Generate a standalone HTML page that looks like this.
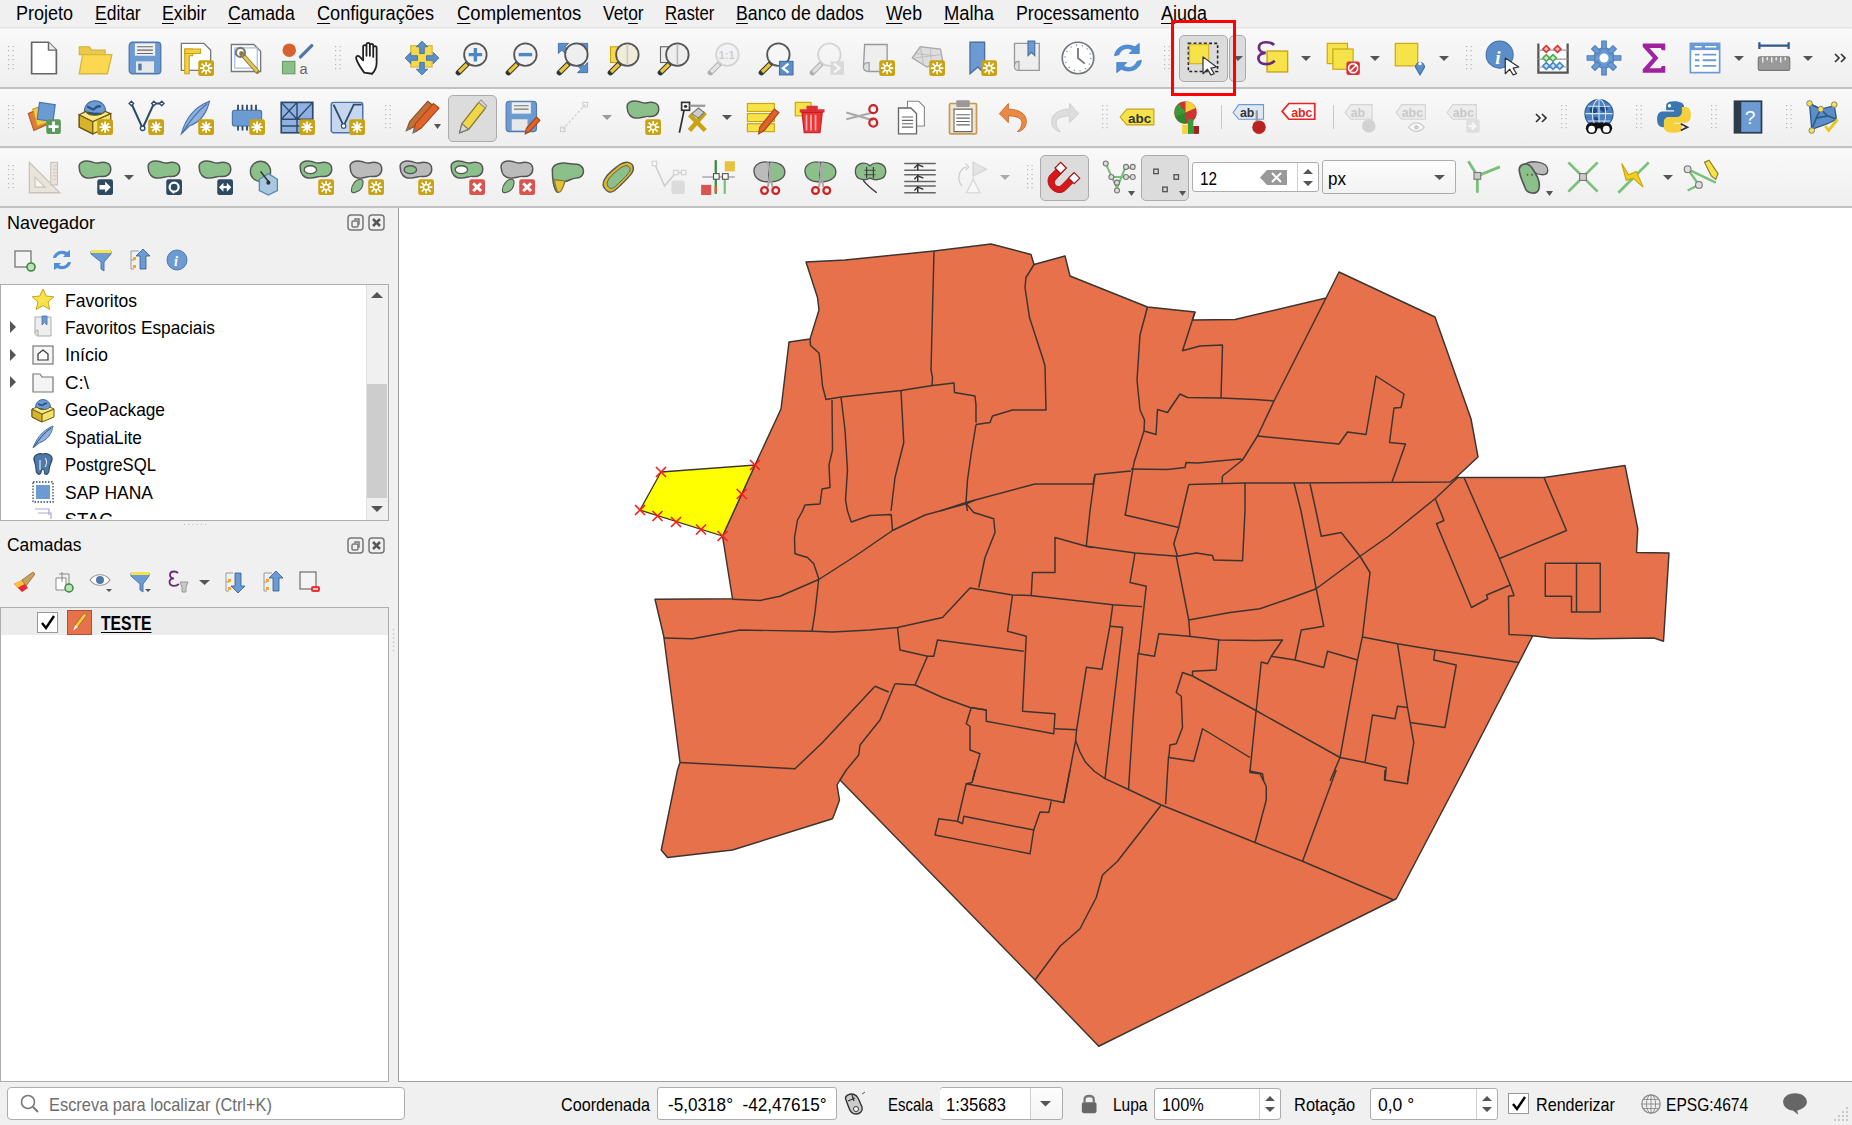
<!DOCTYPE html>
<html><head><meta charset="utf-8">
<style>
*{box-sizing:border-box}
html,body{margin:0;padding:0;width:1852px;height:1125px;overflow:hidden;background:#f0f0f0;font-family:"Liberation Sans",sans-serif;color:#000;position:relative}
.a{position:absolute}
.menu{position:absolute;top:0;left:0;width:1852px;height:28px;background:#f0f0f0;border-bottom:1px solid #e3e3e3}
.mi{position:absolute;white-space:nowrap}
.mi u{text-decoration:underline;text-underline-offset:3px;text-decoration-thickness:1px}
.tb{position:absolute;left:0;width:1852px;background:linear-gradient(#f9f9f9,#efefef);border-bottom:2px solid #c2c2c2}
.handle{position:absolute;width:6px;height:28px;background-image:radial-gradient(circle,#b8b8b8 45%,transparent 50%);background-size:3px 4px}
.dock{position:absolute;left:0;width:388px}
.title{position:absolute;font-size:18px}
.tree{position:absolute;background:#fff;border:1px solid #adadad}
.ti{position:absolute;font-size:18px;white-space:nowrap}
.status{position:absolute;left:0;top:1082px;width:1852px;height:43px;background:#f0f0f0}
.st{position:absolute;font-size:17px;white-space:nowrap}
.box{position:absolute;background:#fff;border:1px solid #adadad;border-radius:3px}
svg{position:absolute;overflow:visible}
.act{position:absolute;background:#dcdcdc;border:1.5px solid #ababab;border-radius:5px}
.chev{font-size:22px;color:#333;line-height:28px}
</style></head><body>
<!-- MENU -->
<div class="menu"></div>
<div class="mi" style="left:15.7px;top:3.1px;font-size:19.3px;font-weight:normal;color:#000;transform:scaleX(0.933);transform-origin:0 0;">Projeto</div>
<div class="mi" style="left:95.0px;top:3.1px;font-size:19.3px;font-weight:normal;color:#000;transform:scaleX(0.907);transform-origin:0 0;"><u>E</u>ditar</div>
<div class="mi" style="left:162.3px;top:3.1px;font-size:19.3px;font-weight:normal;color:#000;transform:scaleX(0.921);transform-origin:0 0;"><u>E</u>xibir</div>
<div class="mi" style="left:228.3px;top:3.1px;font-size:19.3px;font-weight:normal;color:#000;transform:scaleX(0.915);transform-origin:0 0;"><u>C</u>amada</div>
<div class="mi" style="left:317.3px;top:3.1px;font-size:19.3px;font-weight:normal;color:#000;transform:scaleX(0.941);transform-origin:0 0;"><u>C</u>onfigurações</div>
<div class="mi" style="left:456.7px;top:3.1px;font-size:19.3px;font-weight:normal;color:#000;transform:scaleX(0.958);transform-origin:0 0;"><u>C</u>omplementos</div>
<div class="mi" style="left:602.7px;top:3.1px;font-size:19.3px;font-weight:normal;color:#000;transform:scaleX(0.901);transform-origin:0 0;">Vet<u>o</u>r</div>
<div class="mi" style="left:665.0px;top:3.1px;font-size:19.3px;font-weight:normal;color:#000;transform:scaleX(0.868);transform-origin:0 0;"><u>R</u>aster</div>
<div class="mi" style="left:736.0px;top:3.1px;font-size:19.3px;font-weight:normal;color:#000;transform:scaleX(0.918);transform-origin:0 0;"><u>B</u>anco de dados</div>
<div class="mi" style="left:885.7px;top:3.1px;font-size:19.3px;font-weight:normal;color:#000;transform:scaleX(0.916);transform-origin:0 0;"><u>W</u>eb</div>
<div class="mi" style="left:944.0px;top:3.1px;font-size:19.3px;font-weight:normal;color:#000;transform:scaleX(0.952);transform-origin:0 0;"><u>M</u>alha</div>
<div class="mi" style="left:1016.0px;top:3.1px;font-size:19.3px;font-weight:normal;color:#000;transform:scaleX(0.918);transform-origin:0 0;">Pro<u>c</u>essamento</div>
<div class="mi" style="left:1161.0px;top:3.1px;font-size:19.3px;font-weight:normal;color:#000;transform:scaleX(0.932);transform-origin:0 0;"><u>A</u>juda</div>
<!-- TOOLBARS -->
<div class="tb" style="top:29px;height:60px"></div>
<div class="tb" style="top:89px;height:59px"></div>
<div class="tb" style="top:149px;height:59px"></div>

<svg style="left:8px;top:46px" width="6" height="26"><g fill="#b5b5b5"><rect x="0" y="0" width="1.2" height="1.2"/><rect x="4.5" y="0" width="1.2" height="1.2"/><rect x="0" y="4" width="1.2" height="1.2"/><rect x="4.5" y="4" width="1.2" height="1.2"/><rect x="0" y="9" width="1.2" height="1.2"/><rect x="4.5" y="9" width="1.2" height="1.2"/><rect x="0" y="13" width="1.2" height="1.2"/><rect x="4.5" y="13" width="1.2" height="1.2"/><rect x="0" y="18" width="1.2" height="1.2"/><rect x="4.5" y="18" width="1.2" height="1.2"/><rect x="0" y="22" width="1.2" height="1.2"/><rect x="4.5" y="22" width="1.2" height="1.2"/></g></svg>
<svg style="left:26px;top:40px" width="36" height="36" viewBox="0 0 32 32"><path d="M5 2h15l7 7v21H5z" fill="#fff" stroke="#666" stroke-width="1.5" stroke-linejoin="round"/><path d="M20 2v7h7" fill="#eee" stroke="#666" stroke-width="1.3"/></svg>
<svg style="left:77px;top:40px" width="36" height="36" viewBox="0 0 32 32"><path d="M2 6h9l2 3h12v4H2z" fill="#e9c94a" stroke="#d4b23a"/><path d="M2 30L5 13h26l-4 17z" fill="#fbd84f" stroke="#d9b63c" stroke-width="1.2"/></svg>
<svg style="left:127px;top:40px" width="36" height="36" viewBox="0 0 32 32"><rect x="2" y="2" width="28" height="28" rx="3" fill="#6b9bd2" stroke="#4f79ab" stroke-width="1.2"/><rect x="7" y="3" width="18" height="11" fill="#f0f0f0"/><path d="M9 6h14M9 9h14M9 12h14" stroke="#666" stroke-width="1"/><rect x="8" y="19" width="16" height="10" fill="#e8e8e8"/><rect x="10" y="21" width="3" height="6" fill="#4f79ab"/></svg>
<svg style="left:178px;top:40px" width="36" height="36" viewBox="0 0 32 32"><path d="M3 3h20l6 6v18H3z" fill="#fff" stroke="#777" stroke-width="1.2"/><path d="M6 8h7v6h-3v16H6z" fill="#f4cf48" stroke="#c9a313"/><path d="M6 8h14v4H6z" fill="#f4cf48" stroke="#c9a313"/><rect x="18" y="18" width="14" height="14" rx="2" fill="#c9a313"/><path d="M25 19.5v11M19.5 25h11M21 21l8 8M29 21l-8 8" stroke="#fff" stroke-width="1.4"/><circle cx="25" cy="25" r="2.3" fill="#c9a313" stroke="#fff" stroke-width="1.2"/></svg>
<svg style="left:228px;top:40px" width="36" height="36" viewBox="0 0 32 32"><path d="M3 4h20l6 6v18H3z" fill="#fff" stroke="#777" stroke-width="1.2"/><rect x="6" y="7" width="20" height="18" fill="none" stroke="#9ab6e6"/><path d="M12 12l14 16" stroke="#8a7a3a" stroke-width="4" stroke-linecap="round"/><path d="M13 13l13 15" stroke="#e5c454" stroke-width="2.5"/><circle cx="11" cy="11" r="4" fill="none" stroke="#777" stroke-width="2"/></svg>
<svg style="left:278px;top:40px" width="36" height="36" viewBox="0 0 32 32"><circle cx="10" cy="9" r="6" fill="#d8622f"/><path d="M20 15L30 5" stroke="#4f79ab" stroke-width="3" stroke-linecap="round"/><rect x="4" y="19" width="11" height="11" fill="#8cc08a" stroke="#6a9a68"/><text x="19" y="30" font-family="Liberation Sans" font-size="13" fill="#666">a</text></svg>
<svg style="left:335px;top:46px" width="6" height="26"><g fill="#b5b5b5"><rect x="0" y="0" width="1.2" height="1.2"/><rect x="4.5" y="0" width="1.2" height="1.2"/><rect x="0" y="4" width="1.2" height="1.2"/><rect x="4.5" y="4" width="1.2" height="1.2"/><rect x="0" y="9" width="1.2" height="1.2"/><rect x="4.5" y="9" width="1.2" height="1.2"/><rect x="0" y="13" width="1.2" height="1.2"/><rect x="4.5" y="13" width="1.2" height="1.2"/><rect x="0" y="18" width="1.2" height="1.2"/><rect x="4.5" y="18" width="1.2" height="1.2"/><rect x="0" y="22" width="1.2" height="1.2"/><rect x="4.5" y="22" width="1.2" height="1.2"/></g></svg>
<svg style="left:353px;top:40px" width="36" height="36" viewBox="0 0 32 32"><path d="M10 29C7 25 4 20 3 17C2 15 4 13 6 15L9 18V6C9 4 12 4 12 6V14V4C12 2 15 2 15 4V14V5C15 3 18 3 18 5V15V7C18 5 21 5 21 7V20C21 25 19 28 17 30Z" fill="#fff" stroke="#222" stroke-width="1.6" stroke-linejoin="round"/></svg>
<svg style="left:404px;top:40px" width="36" height="36" viewBox="0 0 32 32"><rect x="6" y="5" width="19" height="19" fill="#f5d94a" stroke="#d6b73a"/><path d="M16 1l5 5h-3v6h-4V6h-3zM16 31l5-5h-3v-6h-4v6h-3zM1 16l5-5v3h6v4H6v3zM31 16l-5-5v3h-6v4h6v3z" fill="#5c8fc9" stroke="#3f6fa8" stroke-width="0.8"/></svg>
<svg style="left:454px;top:40px" width="36" height="36" viewBox="0 0 32 32"><path d="M4 29L12 21" stroke="#333" stroke-width="5" stroke-linecap="round"/><path d="M4.5 28.5L11.5 21.5" stroke="#e8c83a" stroke-width="3"/><circle cx="19" cy="13" r="10" fill="#f2f2f2" stroke="#555" stroke-width="1.6"/><path d="M19 7v12M13 13h12" stroke="#4f86c6" stroke-width="3"/></svg>
<svg style="left:504px;top:40px" width="36" height="36" viewBox="0 0 32 32"><path d="M4 29L12 21" stroke="#333" stroke-width="5" stroke-linecap="round"/><path d="M4.5 28.5L11.5 21.5" stroke="#e8c83a" stroke-width="3"/><circle cx="19" cy="13" r="10" fill="#f2f2f2" stroke="#555" stroke-width="1.6"/><path d="M13 13h12" stroke="#4f86c6" stroke-width="3"/></svg>
<svg style="left:555px;top:40px" width="36" height="36" viewBox="0 0 32 32"><path d="M3 3h9l-3 3 5 5-3 3-5-5-3 3zM29 3v9l-3-3-5 5-3-3 5-5-3-3zM29 29h-9l3-3-5-5 3-3 5 5 3-3z" fill="#5c8fc9" stroke="#3f6fa8" stroke-width="0.8"/><path d="M4 29L12 21" stroke="#333" stroke-width="5" stroke-linecap="round"/><path d="M4.5 28.5L11.5 21.5" stroke="#e8c83a" stroke-width="3"/><circle cx="19" cy="13" r="10" fill="#eee" stroke="#555" stroke-width="1.6"/></svg>
<svg style="left:606px;top:40px" width="36" height="36" viewBox="0 0 32 32"><rect x="4" y="6" width="12" height="14" fill="#f5d94a" stroke="#c9a313"/><path d="M4 29L12 21" stroke="#333" stroke-width="5" stroke-linecap="round"/><path d="M4.5 28.5L11.5 21.5" stroke="#e8c83a" stroke-width="3"/><circle cx="19" cy="13" r="10" fill="#f0ecd8" stroke="#555" stroke-width="1.6"/><path d="M19 4v18" stroke="#ccc" stroke-width="1.5"/></svg>
<svg style="left:656px;top:40px" width="36" height="36" viewBox="0 0 32 32"><rect x="4" y="6" width="12" height="14" fill="#eee" stroke="#666"/><path d="M4 29L12 21" stroke="#333" stroke-width="5" stroke-linecap="round"/><path d="M4.5 28.5L11.5 21.5" stroke="#e8c83a" stroke-width="3"/><circle cx="19" cy="13" r="10" fill="#eee" stroke="#555" stroke-width="1.6"/><path d="M19 4v18" stroke="#bbb" stroke-width="1.5"/></svg>
<svg style="left:706px;top:40px" width="36" height="36" viewBox="0 0 32 32"><g opacity="0.35"><path d="M4 29L12 21" stroke="#333" stroke-width="5" stroke-linecap="round"/><path d="M4.5 28.5L11.5 21.5" stroke="#ccc" stroke-width="3"/><circle cx="19" cy="13" r="10" fill="#eee" stroke="#999" stroke-width="1.6"/><text x="11" y="17" font-family="Liberation Sans" font-size="10" font-weight="bold" fill="#888">1:1</text></g></svg>
<svg style="left:757px;top:40px" width="36" height="36" viewBox="0 0 32 32"><path d="M4 29L12 21" stroke="#333" stroke-width="5" stroke-linecap="round"/><path d="M4.5 28.5L11.5 21.5" stroke="#e8c83a" stroke-width="3"/><circle cx="19" cy="13" r="10" fill="#f6f6f6" stroke="#555" stroke-width="1.6"/><rect x="20" y="19" width="12" height="12" fill="#5c8fc9" stroke="#3f6fa8"/><path d="M28 21l-5 4 5 4" fill="none" stroke="#fff" stroke-width="2"/></svg>
<svg style="left:808px;top:40px" width="36" height="36" viewBox="0 0 32 32"><g opacity="0.35"><path d="M4 29L12 21" stroke="#333" stroke-width="5" stroke-linecap="round"/><path d="M4.5 28.5L11.5 21.5" stroke="#bbb" stroke-width="3"/><circle cx="19" cy="13" r="10" fill="#f6f6f6" stroke="#999" stroke-width="1.6"/><rect x="20" y="19" width="12" height="12" fill="#aaa"/><path d="M23 21l5 4-5 4" fill="none" stroke="#fff" stroke-width="2"/></g></svg>
<svg style="left:859px;top:40px" width="36" height="36" viewBox="0 0 32 32"><path d="M5 4h20v24H9C6 28 4 27 4 24z" fill="#eee" stroke="#999" stroke-width="1.2"/><path d="M4 24c0-3 2-4 5-4v8" fill="#ddd" stroke="#999"/><rect x="18" y="18" width="14" height="14" rx="2" fill="#c9a313"/><path d="M25 19.5v11M19.5 25h11M21 21l8 8M29 21l-8 8" stroke="#fff" stroke-width="1.4"/><circle cx="25" cy="25" r="2.3" fill="#c9a313" stroke="#fff" stroke-width="1.2"/></svg>
<svg style="left:909px;top:40px" width="36" height="36" viewBox="0 0 32 32"><path d="M3 16L10 6L28 8L30 19L16 24z" fill="#ddd" stroke="#aaa" stroke-width="1.2"/><path d="M7 12L22 14M10 6L13 22M19 7L20 22M5 16L28 13" stroke="#bbb" stroke-width="0.8"/><rect x="18" y="18" width="14" height="14" rx="2" fill="#c9a313"/><path d="M25 19.5v11M19.5 25h11M21 21l8 8M29 21l-8 8" stroke="#fff" stroke-width="1.4"/><circle cx="25" cy="25" r="2.3" fill="#c9a313" stroke="#fff" stroke-width="1.2"/></svg>
<svg style="left:961px;top:40px" width="36" height="36" viewBox="0 0 32 32"><path d="M8 2h13v28l-6-6-7 6z" fill="#6b9bd2" stroke="#4a6fa0" stroke-width="1.2"/><rect x="18" y="18" width="14" height="14" rx="2" fill="#c9a313"/><path d="M25 19.5v11M19.5 25h11M21 21l8 8M29 21l-8 8" stroke="#fff" stroke-width="1.4"/><circle cx="25" cy="25" r="2.3" fill="#c9a313" stroke="#fff" stroke-width="1.2"/></svg>
<svg style="left:1010px;top:40px" width="36" height="36" viewBox="0 0 32 32"><path d="M4 3h22v24H8C5 27 4 26 4 23z" fill="#eee" stroke="#999" stroke-width="1.2"/><path d="M4 23c0-3 2-4 4-4v8" fill="#ddd" stroke="#999"/><path d="M16 1h6v13l-3-3-3 3z" fill="#6b9bd2" stroke="#4a6fa0"/></svg>
<svg style="left:1060px;top:40px" width="36" height="36" viewBox="0 0 32 32"><circle cx="16" cy="16" r="14" fill="#fff" stroke="#777" stroke-width="1.5"/><circle cx="16" cy="16" r="11.5" fill="none" stroke="#6b9bd2" stroke-width="1.3" stroke-dasharray="1 4.2"/><path d="M16 7v9l6 5" fill="none" stroke="#777" stroke-width="1.6"/></svg>
<svg style="left:1110px;top:40px" width="36" height="36" viewBox="0 0 32 32"><path d="M4 14C5 6 14 2 22 6L26 3V12H17L20 9C15 6 10 8 8 13z" fill="#4f8fd6" stroke="#3a74b8" stroke-width="0.6"/><path d="M28 18C27 26 18 30 10 26L6 29V20H15L12 23C17 26 22 24 24 19z" fill="#4f8fd6" stroke="#3a74b8" stroke-width="0.6"/></svg>
<svg style="left:1164px;top:46px" width="6" height="26"><g fill="#b5b5b5"><rect x="0" y="0" width="1.2" height="1.2"/><rect x="4.5" y="0" width="1.2" height="1.2"/><rect x="0" y="4" width="1.2" height="1.2"/><rect x="4.5" y="4" width="1.2" height="1.2"/><rect x="0" y="9" width="1.2" height="1.2"/><rect x="4.5" y="9" width="1.2" height="1.2"/><rect x="0" y="13" width="1.2" height="1.2"/><rect x="4.5" y="13" width="1.2" height="1.2"/><rect x="0" y="18" width="1.2" height="1.2"/><rect x="4.5" y="18" width="1.2" height="1.2"/><rect x="0" y="22" width="1.2" height="1.2"/><rect x="4.5" y="22" width="1.2" height="1.2"/></g></svg>
<div class="act" style="left:1179px;top:35px;width:49px;height:47px"></div>
<div class="act" style="left:1229px;top:35px;width:17px;height:47px"></div>
<svg style="left:1185px;top:40px" width="36" height="36" viewBox="0 0 32 32"><rect x="3" y="3" width="26" height="25" fill="none" stroke="#222" stroke-width="1.4" stroke-dasharray="2.6 2"/><rect x="4" y="4" width="17" height="17" fill="#f6e34a" stroke="#d9b62c" stroke-width="1.2"/><path d="M16 15l0 15 4-4 3 5 3-1-3-5 5-1z" fill="#fff" stroke="#333" stroke-width="1.1" stroke-linejoin="round"/></svg>
<svg style="left:1233px;top:56px" width="10" height="6"><path d="M0 0h10l-5 5z" fill="#555"/></svg>
<svg style="left:1255px;top:40px" width="36" height="36" viewBox="0 0 32 32"><rect x="10.7" y="9.8" width="18.3" height="18.6" fill="#f6e34a" stroke="#c9a313" stroke-width="1.2"/><path d="M17 4.5C15 2.5 12 2 9.5 2C5.5 2 3.5 4 3.5 6.8C3.5 9.5 6 11.3 9.5 11.5C5.5 11.7 3 13.7 3 16.5C3 19.6 6 21.5 10 21.5C13 21.5 15.5 20.5 17.5 18.5" fill="none" stroke="#6a2c7a" stroke-width="2.4"/></svg>
<svg style="left:1301px;top:56px" width="10" height="6"><path d="M0 0h10l-5 5z" fill="#555"/></svg>
<svg style="left:1325px;top:40px" width="36" height="36" viewBox="0 0 32 32"><rect x="2" y="3" width="18" height="18" fill="#f6e34a" stroke="#c9a313"/><rect x="7" y="8" width="18" height="18" fill="#f6e34a" stroke="#c9a313"/><rect x="19" y="19" width="12" height="12" rx="2" fill="#d9303a"/><circle cx="25" cy="25" r="4" fill="none" stroke="#fff" stroke-width="1.5"/><path d="M22 28l6-6" stroke="#fff" stroke-width="1.5"/></svg>
<svg style="left:1370px;top:56px" width="10" height="6"><path d="M0 0h10l-5 5z" fill="#555"/></svg>
<svg style="left:1393px;top:40px" width="36" height="36" viewBox="0 0 32 32"><rect x="2" y="3" width="20" height="20" fill="#f6e34a" stroke="#c9a313"/><path d="M24 31l-4-7a4 4 0 1 1 8 0z" fill="#5c8fc9" stroke="#3f6fa8"/><circle cx="24" cy="21" r="1.5" fill="#fff"/></svg>
<svg style="left:1439px;top:56px" width="10" height="6"><path d="M0 0h10l-5 5z" fill="#555"/></svg>
<svg style="left:1466px;top:46px" width="6" height="26"><g fill="#b5b5b5"><rect x="0" y="0" width="1.2" height="1.2"/><rect x="4.5" y="0" width="1.2" height="1.2"/><rect x="0" y="4" width="1.2" height="1.2"/><rect x="4.5" y="4" width="1.2" height="1.2"/><rect x="0" y="9" width="1.2" height="1.2"/><rect x="4.5" y="9" width="1.2" height="1.2"/><rect x="0" y="13" width="1.2" height="1.2"/><rect x="4.5" y="13" width="1.2" height="1.2"/><rect x="0" y="18" width="1.2" height="1.2"/><rect x="4.5" y="18" width="1.2" height="1.2"/><rect x="0" y="22" width="1.2" height="1.2"/><rect x="4.5" y="22" width="1.2" height="1.2"/></g></svg>
<svg style="left:1485px;top:40px" width="36" height="36" viewBox="0 0 32 32"><circle cx="13" cy="13" r="12" fill="#5c8fc9" stroke="#4575b0"/><text x="9" y="21" font-family="Liberation Serif" font-style="italic" font-weight="bold" font-size="17" fill="#fff">i</text><path d="M18 16l0 14 4-4 3 5 3-1-3-5 5-1z" fill="#fff" stroke="#333" stroke-width="1.1" stroke-linejoin="round"/></svg>
<svg style="left:1535px;top:40px" width="36" height="36" viewBox="0 0 32 32"><rect x="3" y="3" width="26" height="26" fill="#fff" stroke="none"/><path d="M3 3v25M29 3v25M2 29h28" stroke="#555" stroke-width="2"/><path d="M3 9h26M3 17h26M3 24h26" stroke="#999" stroke-width="1"/><g stroke-width="1.5"><path d="M10 5l3 3-3 3-3-3zM20 5l3 3-3 3-3-3z" fill="#f6c0c0" stroke="#d33"/><path d="M10 13l3 3-3 3-3-3zM16 13l3 3-3 3-3-3z" fill="#c9ebc9" stroke="#5a5"/><path d="M10 20l3 3-3 3-3-3zM16 20l3 3-3 3-3-3zM22 20l3 3-3 3-3-3z" fill="#cde0f6" stroke="#48c"/></g></svg>
<svg style="left:1586px;top:40px" width="36" height="36" viewBox="0 0 32 32"><g fill="#6b9bd2" stroke="#4f80be" stroke-width="1"><circle cx="16" cy="16" r="9"/><path d="M14 1h4v7h-4zM14 24h4v7h-4zM1 14h7v4H1zM24 14h7v4h-7zM5 8l3-3 5 5-3 3zM27 24l-3 3-5-5 3-3zM24 5l3 3-5 5-3-3zM8 27l-3-3 5-5 3 3z"/></g><circle cx="16" cy="16" r="4" fill="#fff"/></svg>
<svg style="left:1636px;top:40px" width="36" height="36" viewBox="0 0 32 32"><path d="M6 3h20v6h-3l-1-2H12l8 9-8 9h10l1-2h3v6H6v-3l9-10-9-10z" fill="#a0229f"/></svg>
<svg style="left:1687px;top:40px" width="36" height="36" viewBox="0 0 32 32"><rect x="3" y="3" width="26" height="26" fill="#fff" stroke="#6b9bd2" stroke-width="1.5"/><rect x="3" y="3" width="26" height="6" fill="#6b9bd2"/><path d="M7 6h6M16 6h10" stroke="#fff" stroke-width="1.5"/><path d="M7 13h4M14 13h12M7 18h4M14 18h12M7 23h4M14 23h12" stroke="#6b9bd2" stroke-width="1.6"/></svg>
<svg style="left:1734px;top:56px" width="10" height="6"><path d="M0 0h10l-5 5z" fill="#555"/></svg>
<svg style="left:1756px;top:40px" width="36" height="36" viewBox="0 0 32 32"><path d="M2 5h28M3 2v6M29 2v6" stroke="#2d5a8a" stroke-width="2"/><rect x="2" y="15" width="28" height="12" rx="1.5" fill="#999" stroke="#777"/><path d="M6 15v5M10 15v3M14 15v5M18 15v3M22 15v5M26 15v3" stroke="#eee" stroke-width="1.2"/></svg>
<svg style="left:1803px;top:56px" width="10" height="6"><path d="M0 0h10l-5 5z" fill="#555"/></svg>
<svg style="left:1834px;top:53px" width="12" height="10"><path d="M1 1l4 4-4 4M7 1l4 4-4 4" fill="none" stroke="#333" stroke-width="1.7"/></svg>
<div class="a" style="left:1171px;top:20px;width:65px;height:76px;border:3px solid #ff0000"></div>
<svg style="left:8px;top:105px" width="6" height="26"><g fill="#b5b5b5"><rect x="0" y="0" width="1.2" height="1.2"/><rect x="4.5" y="0" width="1.2" height="1.2"/><rect x="0" y="4" width="1.2" height="1.2"/><rect x="4.5" y="4" width="1.2" height="1.2"/><rect x="0" y="9" width="1.2" height="1.2"/><rect x="4.5" y="9" width="1.2" height="1.2"/><rect x="0" y="13" width="1.2" height="1.2"/><rect x="4.5" y="13" width="1.2" height="1.2"/><rect x="0" y="18" width="1.2" height="1.2"/><rect x="4.5" y="18" width="1.2" height="1.2"/><rect x="0" y="22" width="1.2" height="1.2"/><rect x="4.5" y="22" width="1.2" height="1.2"/></g></svg>
<svg style="left:26px;top:99px" width="36" height="36" viewBox="0 0 32 32"><path d="M2 13l11-5 5 15-11 5z" fill="#e07a3a" stroke="#b85a25"/><path d="M6 9l12-4 4 15-12 4z" fill="#f5c84a" stroke="#c9a313"/><path d="M12 3l14 2-2 15-14-2z" fill="#6b9bd2" stroke="#4a73a8"/><rect x="18" y="18" width="13" height="13" rx="2" fill="#5a9a5a"/><path d="M24.5 20v9M20 24.5h9" stroke="#fff" stroke-width="2.5"/></svg>
<svg style="left:77px;top:99px" width="36" height="36" viewBox="0 0 32 32"><circle cx="16" cy="11" r="9.5" fill="#6b9bd2" stroke="#3f6fa8"/><path d="M9 7c3 0 4 3 6 2s3-4 6-2M8 13c3-2 6 1 9 0c2 0 3 1 5 0" stroke="#2c5080" stroke-width="2" fill="none"/><path d="M2 14l12 6 16-7v11l-16 7-12-6z" fill="#f5e26a" stroke="#6a5410" stroke-width="1.1"/><path d="M2 14l12 6v11l-12-6z" fill="#d6b32a" stroke="#6a5410" stroke-width="1.1"/><path d="M2 14l6-3c2 4 12 5 17 0l5 2-16 7z" fill="#f8ec8a" stroke="#6a5410" stroke-width="1"/><rect x="18" y="18" width="14" height="14" rx="2" fill="#c9a313"/><path d="M25 20v10M20 25h10M21.5 21.5l7 7M28.5 21.5l-7 7" stroke="#fff" stroke-width="1.6"/></svg>
<svg style="left:128px;top:99px" width="36" height="36" viewBox="0 0 32 32"><path d="M3 4l10 22 10-22h7" fill="none" stroke="#2d4a6a" stroke-width="1.8"/><g fill="#fff" stroke="#2d4a6a" stroke-width="1.2"><path d="M3 2l2 2-2 2-2-2z"/><path d="M23 2l2 2-2 2-2-2z"/><path d="M30 2l2 2-2 2-2-2z"/><circle cx="13" cy="26" r="2"/></g><rect x="18" y="18" width="14" height="14" rx="2" fill="#c9a313"/><path d="M25 20v10M20 25h10M21.5 21.5l7 7M28.5 21.5l-7 7" stroke="#fff" stroke-width="1.6"/></svg>
<svg style="left:178px;top:99px" width="36" height="36" viewBox="0 0 32 32"><path d="M3 31C6 20 12 8 28 2C26 10 22 20 10 24z" fill="#8fb0e0" stroke="#4a73a8" stroke-width="1"/><path d="M4 30C10 20 16 12 26 4" stroke="#4a73a8" stroke-width="1" fill="none"/><rect x="18" y="18" width="14" height="14" rx="2" fill="#c9a313"/><path d="M25 20v10M20 25h10M21.5 21.5l7 7M28.5 21.5l-7 7" stroke="#fff" stroke-width="1.6"/></svg>
<svg style="left:229px;top:99px" width="36" height="36" viewBox="0 0 32 32"><rect x="3" y="10" width="26" height="14" rx="2" fill="#6b9bd2" stroke="#4a73a8"/><path d="M8 5v5M12 5v5M16 5v5M20 5v5M24 5v5M8 24v4M12 24v4M16 24v4M20 24v4M24 24v4" stroke="#2d4a6a" stroke-width="1.6"/><rect x="18" y="18" width="14" height="14" rx="2" fill="#c9a313"/><path d="M25 20v10M20 25h10M21.5 21.5l7 7M28.5 21.5l-7 7" stroke="#fff" stroke-width="1.6"/></svg>
<svg style="left:279px;top:99px" width="36" height="36" viewBox="0 0 32 32"><rect x="2" y="3" width="28" height="27" fill="#8fb0e0" stroke="#2d4a6a" stroke-width="1.5"/><path d="M2 18h28M16 3v27M2 3l14 15M16 3L2 18M30 3L16 18M2 24h28" stroke="#2d4a6a" stroke-width="1.3"/><rect x="18" y="18" width="14" height="14" rx="2" fill="#c9a313"/><path d="M25 20v10M20 25h10M21.5 21.5l7 7M28.5 21.5l-7 7" stroke="#fff" stroke-width="1.6"/></svg>
<svg style="left:329px;top:99px" width="36" height="36" viewBox="0 0 32 32"><rect x="2" y="3" width="28" height="27" rx="2" fill="#c5d6ee" stroke="#4a73a8" stroke-width="1.3"/><path d="M4 5l9 19 9-19h7" fill="none" stroke="#2d4a6a" stroke-width="1.6"/><circle cx="13" cy="24" r="2" fill="#fff" stroke="#2d4a6a"/><rect x="18" y="18" width="14" height="14" rx="2" fill="#c9a313"/><path d="M25 20v10M20 25h10M21.5 21.5l7 7M28.5 21.5l-7 7" stroke="#fff" stroke-width="1.6"/></svg>
<svg style="left:385px;top:105px" width="6" height="26"><g fill="#b5b5b5"><rect x="0" y="0" width="1.2" height="1.2"/><rect x="4.5" y="0" width="1.2" height="1.2"/><rect x="0" y="4" width="1.2" height="1.2"/><rect x="4.5" y="4" width="1.2" height="1.2"/><rect x="0" y="9" width="1.2" height="1.2"/><rect x="4.5" y="9" width="1.2" height="1.2"/><rect x="0" y="13" width="1.2" height="1.2"/><rect x="4.5" y="13" width="1.2" height="1.2"/><rect x="0" y="18" width="1.2" height="1.2"/><rect x="4.5" y="18" width="1.2" height="1.2"/><rect x="0" y="22" width="1.2" height="1.2"/><rect x="4.5" y="22" width="1.2" height="1.2"/></g></svg>
<svg style="left:403px;top:99px" width="36" height="36" viewBox="0 0 32 32"><path d="M3 28l3-8 16-18 5 4-16 18z" fill="#c2703a" stroke="#8a4a20"/><path d="M9 30l2-8 16-18 5 4-16 18z" fill="#e2622a" stroke="#a04418"/><path d="M3 28l1-4 3 3zM9 30l1-4 3 3z" fill="#777"/></svg>
<svg style="left:433.5px;top:124px" width="7" height="6"><path d="M0 0h7l-3.5 5z" fill="#555"/></svg>
<div class="act" style="left:448px;top:95px;width:49px;height:47px"></div>
<svg style="left:454px;top:99px" width="36" height="36" viewBox="0 0 32 32"><path d="M5 30l2-8L22 3l6 5L13 27z" fill="#eed84a" stroke="#8a7a2a" stroke-width="1.1"/><path d="M5 30l2-8 6 5z" fill="#d8d8d8" stroke="#777"/><path d="M22 3l6 5 1-2-5-5z" fill="#ddd" stroke="#999"/></svg>
<svg style="left:505px;top:99px" width="36" height="36" viewBox="0 0 32 32"><rect x="1" y="2" width="27" height="27" rx="3" fill="#6b9bd2" stroke="#4f79ab"/><rect x="6" y="3" width="17" height="10" fill="#eee"/><path d="M8 6h13M8 9h13" stroke="#777"/><rect x="6" y="18" width="14" height="10" fill="#e8e8e8"/><path d="M18 31l1-5 9-10 3 3-9 10z" fill="#e2622a" stroke="#a04418"/></svg>
<svg style="left:556px;top:99px" width="36" height="36" viewBox="0 0 32 32"><g opacity="0.4"><path d="M6 27L26 5" stroke="#999" stroke-width="1.2" stroke-dasharray="2 2"/><rect x="4" y="25" width="4" height="4" fill="none" stroke="#999"/><rect x="24" y="3" width="4" height="4" fill="none" stroke="#999"/></g></svg>
<svg style="left:602px;top:115px" width="10" height="6"><path d="M0 0h10l-5 5z" fill="#999"/></svg>
<svg style="left:625px;top:99px" width="36" height="36" viewBox="0 0 32 32"><path d="M2 8C1 3 6 1 11 2C14 2.5 16 4 19 3.5C24 2 30 3 30 9C30 14 26 16 21 15.5C18 15 16 17 11 17C5 17 2 13 2 8Z" fill="#8cc08a" stroke="#555" stroke-width="1.3"/><rect x="18" y="18" width="14" height="14" rx="2" fill="#c9a313"/><path d="M25 19.5v11M19.5 25h11M21 21l8 8M29 21l-8 8" stroke="#fff" stroke-width="1.4"/><circle cx="25" cy="25" r="2.3" fill="#c9a313" stroke="#fff" stroke-width="1.2"/></svg>
<svg style="left:676px;top:99px" width="36" height="36" viewBox="0 0 32 32"><path d="M3 30L8 6" stroke="#333" stroke-width="1.5"/><rect x="5" y="3" width="7" height="7" fill="#fff" stroke="#333" stroke-width="1.5"/><circle cx="8.5" cy="6.5" r="1.5" fill="#333"/><path d="M12 6h14" stroke="#999" stroke-width="2"/><path d="M12 28L26 12M12 14l14 14" stroke="#c9a313" stroke-width="4"/><path d="M14 13l6-5 5 4-5 5z" fill="#ccc" stroke="#777"/></svg>
<svg style="left:722px;top:115px" width="10" height="6"><path d="M0 0h10l-5 5z" fill="#555"/></svg>
<svg style="left:744px;top:99px" width="36" height="36" viewBox="0 0 32 32"><rect x="3" y="4" width="24" height="7" fill="#f6e34a" stroke="#c9a313"/><rect x="3" y="13" width="24" height="7" fill="#f6e34a" stroke="#c9a313"/><rect x="3" y="22" width="24" height="7" fill="#f6e34a" stroke="#c9a313"/><path d="M13 31l1-6 13-16 4 3-13 16z" fill="#e2622a" stroke="#a04418"/></svg>
<svg style="left:793px;top:99px" width="36" height="36" viewBox="0 0 32 32"><rect x="2" y="3" width="14" height="12" fill="#f6e34a" stroke="#c9a313"/><path d="M6 9h22v3H6zM12 6h10v3H12z" fill="#d9303a"/><path d="M8 12h18l-2 18H10z" fill="#e33" stroke="#b22"/><path d="M12 14v14M16 14v14M20 14v14" stroke="#f8b0b0" stroke-width="1.5"/></svg>
<svg style="left:844px;top:99px" width="36" height="36" viewBox="0 0 32 32"><path d="M2 12l24 7M2 18l24-6" stroke="#aaa" stroke-width="2"/><circle cx="26" cy="9" r="3.5" fill="none" stroke="#c22" stroke-width="2"/><circle cx="26" cy="21" r="3.5" fill="none" stroke="#c22" stroke-width="2"/></svg>
<svg style="left:894px;top:99px" width="36" height="36" viewBox="0 0 32 32"><path d="M12 2h10l5 5v17H12z" fill="#fff" stroke="#888"/><path d="M4 8h11l5 5v18H4z" fill="#fff" stroke="#666" stroke-width="1.2"/><path d="M7 16h10M7 19h10M7 22h10M7 25h10" stroke="#666"/></svg>
<svg style="left:945px;top:99px" width="36" height="36" viewBox="0 0 32 32"><rect x="4" y="4" width="24" height="27" rx="1" fill="#f2e6cf" stroke="#c49a5a" stroke-width="1.5"/><rect x="10" y="1" width="12" height="6" rx="1" fill="#999"/><path d="M8 9h16v20H8z" fill="#fff" stroke="#666"/><path d="M10 14h12M10 17h12M10 20h12M10 23h12" stroke="#666"/></svg>
<svg style="left:996px;top:99px" width="36" height="36" viewBox="0 0 32 32"><path d="M3 13l8-9v5c9 0 16 4 16 11 0 6-5 9-8 9 3-3 4-5 4-8 0-4-5-6-12-6v6z" fill="#e88a45" stroke="#c96a2a" stroke-width="0.8"/></svg>
<svg style="left:1046px;top:99px" width="36" height="36" viewBox="0 0 32 32"><path d="M29 13l-8-9v5C12 9 5 13 5 20c0 6 5 9 8 9-3-3-4-5-4-8 0-4 5-6 12-6v6z" fill="#ddd" stroke="#ccc" stroke-width="0.8"/></svg>
<svg style="left:1102px;top:105px" width="6" height="26"><g fill="#b5b5b5"><rect x="0" y="0" width="1.2" height="1.2"/><rect x="4.5" y="0" width="1.2" height="1.2"/><rect x="0" y="4" width="1.2" height="1.2"/><rect x="4.5" y="4" width="1.2" height="1.2"/><rect x="0" y="9" width="1.2" height="1.2"/><rect x="4.5" y="9" width="1.2" height="1.2"/><rect x="0" y="13" width="1.2" height="1.2"/><rect x="4.5" y="13" width="1.2" height="1.2"/><rect x="0" y="18" width="1.2" height="1.2"/><rect x="4.5" y="18" width="1.2" height="1.2"/><rect x="0" y="22" width="1.2" height="1.2"/><rect x="4.5" y="22" width="1.2" height="1.2"/></g></svg>
<svg style="left:1119px;top:99px" width="36" height="36" viewBox="0 0 32 32"><path d="M1 16l6-7h24v14H7z" fill="#f6e34a" stroke="#c9a313"/><text x="8" y="21" font-family="Liberation Sans" font-weight="bold" font-size="12" fill="#333">abc</text></svg>
<svg style="left:1172px;top:99px" width="36" height="36" viewBox="0 0 32 32"><circle cx="12" cy="12" r="10" fill="#c33"/><path d="M12 12V2A10 10 0 0 1 21 8z" fill="#f6d33a"/><path d="M12 12L3 16A10 10 0 0 1 6 4z" fill="#3a9a3a"/><path d="M12 12L3 16A10 10 0 0 0 12 22z" fill="#2a8a2a"/><rect x="14" y="18" width="5" height="13" fill="#3a9a3a"/><rect x="9" y="23" width="5" height="8" fill="#f6d33a"/><rect x="19" y="24" width="5" height="7" fill="#a02020"/></svg>
<div class="a" style="left:1221px;top:105px;width:1px;height:24px;background:#c8c8c8"></div>
<svg style="left:1232px;top:99px" width="36" height="36" viewBox="0 0 32 32"><path d="M1 12l5-7h22v13H6z" fill="#dfe9f6" stroke="#6b9bd2"/><text x="7" y="16" font-family="Liberation Sans" font-weight="bold" font-size="11" fill="#333">ab</text><circle cx="24" cy="25" r="6" fill="#b22"/><path d="M22 10v10" stroke="#999" stroke-width="2"/></svg>
<svg style="left:1281px;top:99px" width="36" height="36" viewBox="0 0 32 32"><path d="M1 11l6-7h23v14H7z" fill="#fff" stroke="#e22" stroke-width="1.5"/><text x="9" y="16" font-family="Liberation Sans" font-weight="bold" font-size="11" fill="#e22">abc</text></svg>
<div class="a" style="left:1333px;top:105px;width:1px;height:24px;background:#c8c8c8"></div>
<svg style="left:1344px;top:99px" width="36" height="36" viewBox="0 0 32 32"><g opacity="0.35"><path d="M1 12l5-7h19v13H6z" fill="#ddd" stroke="#999"/><text x="6" y="16" font-family="Liberation Sans" font-weight="bold" font-size="11" fill="#777">ab</text><circle cx="22" cy="24" r="6" fill="#999"/></g></svg>
<svg style="left:1395px;top:99px" width="36" height="36" viewBox="0 0 32 32"><g opacity="0.35"><path d="M1 12l5-7h21v13H6z" fill="#ddd" stroke="#999"/><text x="6" y="16" font-family="Liberation Sans" font-weight="bold" font-size="11" fill="#777">abc</text><path d="M12 25c4-5 10-5 14 0-4 5-10 5-14 0z" fill="#fff" stroke="#888"/><circle cx="19" cy="25" r="2" fill="#888"/></g></svg>
<svg style="left:1446px;top:99px" width="36" height="36" viewBox="0 0 32 32"><g opacity="0.35"><path d="M1 12l5-7h21v13H6z" fill="#ddd" stroke="#999"/><text x="6" y="16" font-family="Liberation Sans" font-weight="bold" font-size="11" fill="#777">abc</text><rect x="18" y="18" width="12" height="12" rx="2" fill="#bbb"/><path d="M20 24h6M23 21l3 3-3 3" stroke="#fff" stroke-width="2" fill="none"/></g></svg>
<svg style="left:1535px;top:112.5px" width="12" height="10"><path d="M1 1l4 4-4 4M7 1l4 4-4 4" fill="none" stroke="#333" stroke-width="1.7"/></svg>
<svg style="left:1561px;top:105px" width="6" height="26"><g fill="#b5b5b5"><rect x="0" y="0" width="1.2" height="1.2"/><rect x="4.5" y="0" width="1.2" height="1.2"/><rect x="0" y="4" width="1.2" height="1.2"/><rect x="4.5" y="4" width="1.2" height="1.2"/><rect x="0" y="9" width="1.2" height="1.2"/><rect x="4.5" y="9" width="1.2" height="1.2"/><rect x="0" y="13" width="1.2" height="1.2"/><rect x="4.5" y="13" width="1.2" height="1.2"/><rect x="0" y="18" width="1.2" height="1.2"/><rect x="4.5" y="18" width="1.2" height="1.2"/><rect x="0" y="22" width="1.2" height="1.2"/><rect x="4.5" y="22" width="1.2" height="1.2"/></g></svg>
<svg style="left:1581px;top:99px" width="36" height="36" viewBox="0 0 32 32"><circle cx="16" cy="13" r="12.5" fill="#4a7fc0" stroke="#2d5a8a"/><path d="M8 8c2-2 5-1 6 1s-1 4-3 4-4-2-3-5zM17 6c3-1 6 0 7 3-2 1-3 3-5 2s-3-4-2-5zM12 16c2 0 4 1 4 3l-3 2c-1-1-2-3-1-5z" fill="#1f4a80"/><path d="M4 13h24M16 1v24M6 6.5h20M6 19.5h20" stroke="#d8e6f6" stroke-width="0.9"/><ellipse cx="16" cy="13" rx="6" ry="12.5" fill="none" stroke="#d8e6f6" stroke-width="0.9"/><circle cx="9.5" cy="26" r="5.2" fill="#111"/><circle cx="22.5" cy="26" r="5.2" fill="#111"/><rect x="12" y="21" width="8" height="5" fill="#111"/><circle cx="9.5" cy="26.8" r="3" fill="#fff"/><circle cx="22.5" cy="26.8" r="3" fill="#fff"/></svg>
<svg style="left:1636px;top:105px" width="6" height="26"><g fill="#b5b5b5"><rect x="0" y="0" width="1.2" height="1.2"/><rect x="4.5" y="0" width="1.2" height="1.2"/><rect x="0" y="4" width="1.2" height="1.2"/><rect x="4.5" y="4" width="1.2" height="1.2"/><rect x="0" y="9" width="1.2" height="1.2"/><rect x="4.5" y="9" width="1.2" height="1.2"/><rect x="0" y="13" width="1.2" height="1.2"/><rect x="4.5" y="13" width="1.2" height="1.2"/><rect x="0" y="18" width="1.2" height="1.2"/><rect x="4.5" y="18" width="1.2" height="1.2"/><rect x="0" y="22" width="1.2" height="1.2"/><rect x="4.5" y="22" width="1.2" height="1.2"/></g></svg>
<svg style="left:1656px;top:99px" width="36" height="36" viewBox="0 0 32 32"><path d="M16 2c-7 0-7 3-7 5v3h7v1H6c-3 0-5 2-5 7s2 7 5 7h3v-4c0-3 2-5 5-5h7c2 0 4-2 4-4V7c0-3-3-5-9-5z" fill="#3a76b0"/><path d="M16 30c7 0 7-3 7-5v-3h-7v-1h10c3 0 5-2 5-7s-2-7-5-7h-3v4c0 3-2 5-5 5h-7c-2 0-4 2-4 4v5c0 3 3 5 9 5z" fill="#f6cf3a"/><circle cx="12" cy="6" r="1.5" fill="#fff"/><path d="M22 22l6 3-6 3" stroke="#333" stroke-width="1.5" fill="none"/></svg>
<svg style="left:1711px;top:105px" width="6" height="26"><g fill="#b5b5b5"><rect x="0" y="0" width="1.2" height="1.2"/><rect x="4.5" y="0" width="1.2" height="1.2"/><rect x="0" y="4" width="1.2" height="1.2"/><rect x="4.5" y="4" width="1.2" height="1.2"/><rect x="0" y="9" width="1.2" height="1.2"/><rect x="4.5" y="9" width="1.2" height="1.2"/><rect x="0" y="13" width="1.2" height="1.2"/><rect x="4.5" y="13" width="1.2" height="1.2"/><rect x="0" y="18" width="1.2" height="1.2"/><rect x="4.5" y="18" width="1.2" height="1.2"/><rect x="0" y="22" width="1.2" height="1.2"/><rect x="4.5" y="22" width="1.2" height="1.2"/></g></svg>
<svg style="left:1730px;top:99px" width="36" height="36" viewBox="0 0 32 32"><rect x="4" y="2" width="24" height="28" fill="#6b9bd2" stroke="#2d3a4a" stroke-width="1.5"/><rect x="4" y="2" width="6" height="28" fill="#2d3a4a"/><text x="13" y="22" font-family="Liberation Sans" font-size="17" fill="#fff">?</text></svg>
<svg style="left:1786px;top:105px" width="6" height="26"><g fill="#b5b5b5"><rect x="0" y="0" width="1.2" height="1.2"/><rect x="4.5" y="0" width="1.2" height="1.2"/><rect x="0" y="4" width="1.2" height="1.2"/><rect x="4.5" y="4" width="1.2" height="1.2"/><rect x="0" y="9" width="1.2" height="1.2"/><rect x="4.5" y="9" width="1.2" height="1.2"/><rect x="0" y="13" width="1.2" height="1.2"/><rect x="4.5" y="13" width="1.2" height="1.2"/><rect x="0" y="18" width="1.2" height="1.2"/><rect x="4.5" y="18" width="1.2" height="1.2"/><rect x="0" y="22" width="1.2" height="1.2"/><rect x="4.5" y="22" width="1.2" height="1.2"/></g></svg>
<svg style="left:1805px;top:99px" width="36" height="36" viewBox="0 0 32 32"><path d="M4 4l10 5 12-3 2 12-8 4L6 27z" fill="#5c8fc9" stroke="#2d5a8a" stroke-width="1.2"/><path d="M4 4l10 5 6 6 8 3M14 9l-4 8-4 10M10 17l10-2" stroke="#2d5a8a" stroke-width="1.5" fill="none"/><g fill="#f6e34a" stroke="#777" stroke-width="0.8"><circle cx="4" cy="4" r="2.5"/><circle cx="26" cy="5" r="2.5"/><circle cx="14" cy="9" r="2.5"/><circle cx="6" cy="28" r="2.5"/></g><path d="M18 24l3 4 8-10" stroke="#e8c81a" stroke-width="2.5" fill="none"/></svg>
<svg style="left:8px;top:165px" width="6" height="26"><g fill="#b5b5b5"><rect x="0" y="0" width="1.2" height="1.2"/><rect x="4.5" y="0" width="1.2" height="1.2"/><rect x="0" y="4" width="1.2" height="1.2"/><rect x="4.5" y="4" width="1.2" height="1.2"/><rect x="0" y="9" width="1.2" height="1.2"/><rect x="4.5" y="9" width="1.2" height="1.2"/><rect x="0" y="13" width="1.2" height="1.2"/><rect x="4.5" y="13" width="1.2" height="1.2"/><rect x="0" y="18" width="1.2" height="1.2"/><rect x="4.5" y="18" width="1.2" height="1.2"/><rect x="0" y="22" width="1.2" height="1.2"/><rect x="4.5" y="22" width="1.2" height="1.2"/></g></svg>
<svg style="left:26px;top:159px" width="36" height="36" viewBox="0 0 32 32"><path d="M3 3v27h27z" fill="#e8e4dc" stroke="#c9c4b8" stroke-width="1.2"/><path d="M8 16v9h9z" fill="#f4f4f4" stroke="#c9c4b8"/><rect x="22" y="3" width="6" height="20" fill="#e8e4dc" stroke="#c9c4b8"/><path d="M24 6h4M24 9h4M24 12h4M24 15h4M24 18h4" stroke="#c9c4b8" stroke-width="0.7"/></svg>
<svg style="left:77px;top:159px" width="36" height="36" viewBox="0 0 32 32"><path d="M2 8C1 3 6 1 11 2C14 2.5 16 4 19 3.5C24 2 30 3 30 9C30 14 26 16 21 15.5C18 15 16 17 11 17C5 17 2 13 2 8Z" fill="#8cc08a" stroke="#555" stroke-width="1.3"/><rect x="18" y="18" width="14" height="14" rx="2" fill="#2d4a62"/><path d="M20 23h5v-3l5 5-5 5v-3h-5z" fill="#fff"/></svg>
<svg style="left:124px;top:175px" width="10" height="6"><path d="M0 0h10l-5 5z" fill="#555"/></svg>
<svg style="left:146px;top:159px" width="36" height="36" viewBox="0 0 32 32"><path d="M2 8C1 3 6 1 11 2C14 2.5 16 4 19 3.5C24 2 30 3 30 9C30 14 26 16 21 15.5C18 15 16 17 11 17C5 17 2 13 2 8Z" fill="#8cc08a" stroke="#555" stroke-width="1.3"/><rect x="18" y="18" width="14" height="14" rx="2" fill="#2d4a62"/><circle cx="25" cy="25" r="4" fill="none" stroke="#fff" stroke-width="2"/><path d="M25 28v3l-3-2z" fill="#fff"/></svg>
<svg style="left:197px;top:159px" width="36" height="36" viewBox="0 0 32 32"><path d="M2 8C1 3 6 1 11 2C14 2.5 16 4 19 3.5C24 2 30 3 30 9C30 14 26 16 21 15.5C18 15 16 17 11 17C5 17 2 13 2 8Z" fill="#8cc08a" stroke="#555" stroke-width="1.3"/><rect x="18" y="18" width="14" height="14" rx="2" fill="#2d4a62"/><path d="M19.5 25l4-4v3h3v-3l4 4-4 4v-3h-3v3z" fill="#fff"/></svg>
<svg style="left:247px;top:159px" width="36" height="36" viewBox="0 0 32 32"><circle cx="12" cy="11" r="9" fill="#8cc08a" stroke="#555" stroke-width="1.2"/><path d="M19 13l8 5v10l-8 4-8-4V18z" fill="#a8c8e0" stroke="#5a8ab0" stroke-width="1.2"/><path d="M12 11l7 9" stroke="#333" stroke-width="1.4"/><circle cx="19" cy="21" r="1.8" fill="#333"/></svg>
<svg style="left:298px;top:159px" width="36" height="36" viewBox="0 0 32 32"><path d="M2 8C1 3 6 1 11 2C14 2.5 16 4 19 3.5C24 2 30 3 30 9C30 14 26 16 21 15.5C18 15 16 17 11 17C5 17 2 13 2 8Z" fill="#8cc08a" stroke="#555" stroke-width="1.3"/><ellipse cx="11" cy="9.5" rx="5.5" ry="3.5" fill="#fff" stroke="#555" stroke-width="1.2"/><rect x="18" y="18" width="14" height="14" rx="2" fill="#c9a313"/><path d="M25 19.5v11M19.5 25h11M21 21l8 8M29 21l-8 8" stroke="#fff" stroke-width="1.4"/><circle cx="25" cy="25" r="2.3" fill="#c9a313" stroke="#fff" stroke-width="1.2"/></svg>
<svg style="left:348px;top:159px" width="36" height="36" viewBox="0 0 32 32"><path d="M2 8C1 3 6 1 11 2C14 2.5 16 4 19 3.5C24 2 30 3 30 9C30 14 26 16 21 15.5C18 15 16 17 11 17C5 17 2 13 2 8Z" fill="#bbb" stroke="#555" stroke-width="1.3"/><path d="M3 28c0-5 4-10 8-10 3 0 3 4 1 8-2 3-9 6-9 2z" fill="#8cc08a" stroke="#555"/><rect x="18" y="18" width="14" height="14" rx="2" fill="#c9a313"/><path d="M25 19.5v11M19.5 25h11M21 21l8 8M29 21l-8 8" stroke="#fff" stroke-width="1.4"/><circle cx="25" cy="25" r="2.3" fill="#c9a313" stroke="#fff" stroke-width="1.2"/></svg>
<svg style="left:398px;top:159px" width="36" height="36" viewBox="0 0 32 32"><path d="M2 8C1 3 6 1 11 2C14 2.5 16 4 19 3.5C24 2 30 3 30 9C30 14 26 16 21 15.5C18 15 16 17 11 17C5 17 2 13 2 8Z" fill="#bbb" stroke="#555" stroke-width="1.3"/><ellipse cx="11" cy="9.5" rx="5.5" ry="3.5" fill="#8cc08a" stroke="#555" stroke-width="1.2"/><rect x="18" y="18" width="14" height="14" rx="2" fill="#c9a313"/><path d="M25 19.5v11M19.5 25h11M21 21l8 8M29 21l-8 8" stroke="#fff" stroke-width="1.4"/><circle cx="25" cy="25" r="2.3" fill="#c9a313" stroke="#fff" stroke-width="1.2"/></svg>
<svg style="left:449px;top:159px" width="36" height="36" viewBox="0 0 32 32"><path d="M2 8C1 3 6 1 11 2C14 2.5 16 4 19 3.5C24 2 30 3 30 9C30 14 26 16 21 15.5C18 15 16 17 11 17C5 17 2 13 2 8Z" fill="#8cc08a" stroke="#555" stroke-width="1.3"/><ellipse cx="11" cy="9.5" rx="5.5" ry="3.5" fill="#fff" stroke="#555" stroke-width="1.2"/><rect x="18" y="18" width="14" height="14" rx="2" fill="#d9534f"/><rect x="19.5" y="19.5" width="11" height="11" fill="#fff" opacity="0"/><path d="M21.5 21.5l7 7M28.5 21.5l-7 7" stroke="#fff" stroke-width="2.6"/></svg>
<svg style="left:499px;top:159px" width="36" height="36" viewBox="0 0 32 32"><path d="M2 8C1 3 6 1 11 2C14 2.5 16 4 19 3.5C24 2 30 3 30 9C30 14 26 16 21 15.5C18 15 16 17 11 17C5 17 2 13 2 8Z" fill="#bbb" stroke="#555" stroke-width="1.3"/><path d="M3 28c0-5 4-10 8-10 3 0 3 4 1 8-2 3-9 6-9 2z" fill="#8cc08a" stroke="#555"/><rect x="18" y="18" width="14" height="14" rx="2" fill="#d9534f"/><rect x="19.5" y="19.5" width="11" height="11" fill="#fff" opacity="0"/><path d="M21.5 21.5l7 7M28.5 21.5l-7 7" stroke="#fff" stroke-width="2.6"/></svg>
<svg style="left:549px;top:159px" width="36" height="36" viewBox="0 0 32 32"><path d="M3 11C2 4 12 3 17 4C22 5 27 3 30 8C32 13 29 17 24 17C20 17 17 20 14 20C11 28 8 32 6 28C4 24 3 18 3 11Z" fill="#8cc08a" stroke="#555" stroke-width="1.3"/><path d="M5 18c3 2 7 0 9 2-2 8-5 12-7 8-1-3-2-6-2-10z" fill="#e2c23a" stroke="#8a7a2a"/></svg>
<svg style="left:600px;top:159px" width="36" height="36" viewBox="0 0 32 32"><path d="M4 26C1 22 4 16 10 11C16 6 20 2 25 3C30 4 31 9 28 13C24 18 20 22 13 28C9 31 6 29 4 26Z" fill="#d9b62c" stroke="#555" stroke-width="1.2"/><path d="M7 24C5 21 8 17 12 13C17 9 20 6 24 6C27 7 28 10 25 13C22 17 18 20 13 25C10 27 8 26 7 24Z" fill="#8cc08a" stroke="#555" stroke-width="0.8"/></svg>
<svg style="left:650px;top:159px" width="36" height="36" viewBox="0 0 32 32"><g opacity="0.4"><path d="M4 4l9 20 10-12h8" fill="none" stroke="#999" stroke-width="1.5"/><rect x="2" y="2" width="4" height="4" fill="#fff" stroke="#999"/><rect x="21" y="10" width="4" height="4" fill="#fff" stroke="#999"/><rect x="28" y="10" width="4" height="4" fill="#fff" stroke="#999"/><rect x="19" y="19" width="12" height="12" rx="2" fill="#bbb"/></g></svg>
<svg style="left:700px;top:159px" width="36" height="36" viewBox="0 0 32 32"><path d="M14 1v30" stroke="#3a8a3a" stroke-width="2"/><path d="M22 14v17" stroke="#7ac07a" stroke-width="2"/><path d="M2 16h29" stroke="#aaa" stroke-width="1.5"/><rect x="12" y="13" width="5" height="5" fill="#fff" stroke="#555"/><rect x="20" y="13" width="5" height="5" fill="#fff" stroke="#555"/><rect x="22" y="2" width="9" height="9" fill="#e6c33a"/><rect x="1" y="23" width="9" height="9" fill="#d9534f"/><path d="M14 24v6" stroke="#e2622a" stroke-width="2"/></svg>
<svg style="left:751px;top:159px" width="36" height="36" viewBox="0 0 32 32"><path d="M16 3C8 1 1 6 3 13C4 18 10 21 16 20z" fill="#bbb" stroke="#555" stroke-width="1.2"/><path d="M16 3C24 2 31 6 30 13C29 18 22 21 16 20z" fill="#8cc08a" stroke="#555" stroke-width="1.2"/><path d="M15 3l4 22M19 3l-4 22" stroke="#aaa" stroke-width="1.8"/><circle cx="12" cy="28" r="3" fill="none" stroke="#c22" stroke-width="2"/><circle cx="22" cy="28" r="3" fill="none" stroke="#c22" stroke-width="2"/></svg>
<svg style="left:802px;top:159px" width="36" height="36" viewBox="0 0 32 32"><path d="M16 3C8 1 1 6 3 13C4 18 10 21 16 20z" fill="#8cc08a" stroke="#555" stroke-width="1.2"/><path d="M16 3C24 2 31 6 30 13C29 18 22 21 16 20z" fill="#8cc08a" stroke="#555" stroke-width="1.2"/><path d="M15 3l4 22M19 3l-4 22" stroke="#aaa" stroke-width="1.8"/><circle cx="12" cy="28" r="3" fill="none" stroke="#c22" stroke-width="2"/><circle cx="22" cy="28" r="3" fill="none" stroke="#c22" stroke-width="2"/></svg>
<svg style="left:852px;top:159px" width="36" height="36" viewBox="0 0 32 32"><path d="M3 11C3 3 12 2 16 6C20 2 30 3 30 11C30 18 22 20 16 17C10 20 3 18 3 11Z" fill="#8cc08a" stroke="#555" stroke-width="1.2"/><path d="M13 7v10M19 7v10M11 10h10M11 14h10" stroke="#444" stroke-width="1.1"/><path d="M10 19c3 4 8 8 12 11" stroke="#333" stroke-width="1.2" fill="none"/></svg>
<svg style="left:902px;top:159px" width="36" height="36" viewBox="0 0 32 32"><path d="M2 4h28M2 14h28M2 24h28M2 10h28M2 20h28M2 30h28" stroke="#666" stroke-width="1.3"/><path d="M14 4v6M14 14v6M14 24v6" stroke="#333" stroke-width="1.3"/><path d="M11 8l3-3 5 2M11 18l3-3 5 2M11 28l3-3 5 2" stroke="#333" fill="none" stroke-width="1.2"/></svg>
<svg style="left:953px;top:159px" width="36" height="36" viewBox="0 0 32 32"><g opacity="0.4"><path d="M18 2v28" stroke="#bbb" stroke-width="1.3"/><path d="M18 3l12 6-12 6z" fill="#ccc" stroke="#aaa"/><path d="M12 30l6-12 6 12z" fill="#fff" stroke="#aaa"/><path d="M8 24C3 18 5 9 12 7" fill="none" stroke="#999" stroke-width="1.2"/><path d="M11 4l3 3-3 3" fill="none" stroke="#999"/></g></svg>
<svg style="left:1000px;top:175px" width="10" height="6"><path d="M0 0h10l-5 5z" fill="#aaa"/></svg>
<svg style="left:1027px;top:165px" width="6" height="26"><g fill="#b5b5b5"><rect x="0" y="0" width="1.2" height="1.2"/><rect x="4.5" y="0" width="1.2" height="1.2"/><rect x="0" y="4" width="1.2" height="1.2"/><rect x="4.5" y="4" width="1.2" height="1.2"/><rect x="0" y="9" width="1.2" height="1.2"/><rect x="4.5" y="9" width="1.2" height="1.2"/><rect x="0" y="13" width="1.2" height="1.2"/><rect x="4.5" y="13" width="1.2" height="1.2"/><rect x="0" y="18" width="1.2" height="1.2"/><rect x="4.5" y="18" width="1.2" height="1.2"/><rect x="0" y="22" width="1.2" height="1.2"/><rect x="4.5" y="22" width="1.2" height="1.2"/></g></svg>
<div class="act" style="left:1040px;top:155px;width:49px;height:46px"></div>
<svg style="left:1046px;top:159px" width="36" height="36" viewBox="0 0 32 32"><path d="M3 15L14 4l4 4L8 19c-2 3 2 7 5 5L24 13l4 4L17 28C10 34-2 24 3 15z" fill="#d9161a" stroke="#a01010" stroke-width="0.8"/><path d="M11 5l5-5 5 5-5 5zM23 14l5-5 5 5-5 5z" fill="#fff" stroke="#a01010" stroke-width="1" transform="translate(-3 3)"/></svg>
<svg style="left:1099px;top:159px" width="36" height="36" viewBox="0 0 32 32"><path d="M6 4l10 22M16 26l8-20M11 16h9M20 16h10M22 8h8" stroke="#7ac07a" stroke-width="1.8" fill="none"/><g fill="#ddd" stroke="#777" stroke-width="1"><circle cx="6" cy="4" r="2.2"/><circle cx="24" cy="7" r="2.2"/><circle cx="30" cy="7" r="2.2"/><circle cx="11" cy="16" r="2.2"/><circle cx="24" cy="16" r="2.2"/><circle cx="30" cy="16" r="2.2"/><circle cx="16" cy="21" r="2.2"/><circle cx="16" cy="28" r="2.2"/></g></svg>
<svg style="left:1127.5px;top:191px" width="7" height="6"><path d="M0 0h7l-3.5 5z" fill="#555"/></svg>
<div class="act" style="left:1141px;top:155px;width:48px;height:46px"></div>
<svg style="left:1147px;top:159px" width="36" height="36" viewBox="0 0 32 32"><g fill="none" stroke="#555" stroke-width="1.2"><rect x="6" y="9" width="4" height="4"/><rect x="24" y="14" width="4" height="4"/><rect x="14" y="25" width="4" height="4"/></g></svg>
<svg style="left:1178.5px;top:191px" width="7" height="6"><path d="M0 0h7l-3.5 5z" fill="#555"/></svg>
<div class="box" style="left:1192px;top:162px;width:127px;height:30px;border-radius:3px"></div>
<div class="a" style="left:1297px;top:163px;width:1px;height:28px;background:#d0d0d0"></div>
<div class="ti" style="left:1200.0px;top:168.6px;font-size:18.2px;font-weight:normal;color:#000;transform:scaleX(0.840);transform-origin:0 0;">12</div>
<svg style="left:1260px;top:169px" width="28" height="17"><path d="M0 8.5L7 1h20v15H7z" fill="#999"/><path d="M12 4l9 9M21 4l-9 9" stroke="#fff" stroke-width="2"/></svg>
<svg style="left:1301px;top:167px" width="14" height="22"><path d="M2 7l5-5 5 5z M2 14l5 5 5-5z" fill="#555"/></svg>
<div class="box" style="left:1322px;top:160px;width:134px;height:34px;background:linear-gradient(#fdfdfd,#f2f2f2)"></div>
<div class="ti" style="left:1328.0px;top:169.1px;font-size:18.2px;font-weight:normal;color:#000;transform:scaleX(0.937);transform-origin:0 0;">px</div>
<svg style="left:1433.5px;top:175px" width="11" height="6"><path d="M0 0h11l-5.5 5z" fill="#555"/></svg>
<svg style="left:1465px;top:159px" width="36" height="36" viewBox="0 0 32 32"><path d="M11 30V15L3 2M11 15l20-8" stroke="#7ac07a" stroke-width="2.5" fill="none"/><rect x="8" y="12" width="6" height="6" fill="#ccc" stroke="#777"/></svg>
<svg style="left:1514px;top:159px" width="36" height="36" viewBox="0 0 32 32"><path d="M8 6C14 0 30 2 30 10C30 16 22 14 18 12z" fill="#bbb" stroke="#555" stroke-width="1.2"/><path d="M5 12C3 4 12 2 16 8C20 14 24 20 22 27C20 32 12 31 10 26C8 20 6 18 5 12Z" fill="#8cc08a" stroke="#555" stroke-width="1.5"/><circle cx="12" cy="14" r="0.8" fill="#555"/><circle cx="16" cy="14" r="0.8" fill="#555"/></svg>
<svg style="left:1565px;top:159px" width="36" height="36" viewBox="0 0 32 32"><path d="M3 3l26 26M29 3L3 29" stroke="#7ac07a" stroke-width="2.5"/><rect x="13" y="13" width="6" height="6" fill="#ccc" stroke="#777"/></svg>
<svg style="left:1615px;top:159px" width="36" height="36" viewBox="0 0 32 32"><path d="M3 30L30 3" stroke="#7ac07a" stroke-width="2.5"/><path d="M6 4l6 10 7-3 6 14-9-8-6 2z" fill="#f6cf1a" stroke="#c9a313"/></svg>
<svg style="left:1682px;top:159px" width="36" height="36" viewBox="0 0 32 32"><path d="M5 28l10-5L5 9l25 12" stroke="#7ac07a" stroke-width="2.2" fill="none"/><circle cx="5" cy="9" r="3" fill="#ddd" stroke="#777"/><circle cx="15" cy="23" r="3" fill="#ddd" stroke="#777"/><path d="M20 3l4-2 8 12-2 5-4-3z" fill="#f6e34a" stroke="#8a7a2a"/></svg>
<svg style="left:1545.5px;top:191px" width="7" height="6"><path d="M0 0h7l-3.5 5z" fill="#555"/></svg>
<svg style="left:1663px;top:175px" width="10" height="6"><path d="M0 0h10l-5 5z" fill="#555"/></svg>
<!-- LEFT DOCK -->

<div class="tree" style="left:0;top:284px;width:389px;height:237px"></div>

<div class="tree" style="left:0;top:607px;width:389px;height:475px"></div>

<!-- MAP -->
<div class="a" style="left:398px;top:208px;width:1454px;height:874px;background:#fff;border-left:1px solid #a0a0a0;border-bottom:1px solid #a0a0a0"></div>

<svg class="map" width="1454" height="873" viewBox="0 0 1454 873" style="left:398px;top:208px;position:absolute">
<polygon points="408,54 447,52 536,43 593,36 633,46.5 636,56.5 667,48 672,68 749.5,99 797,104 794.5,112 837,111.5 928,90 941,64 1037,109 1073,210.75 1080,249 1058,269.5 1146,269.5 1163.5,267 1227,257.5 1239.75,320.75 1238.5,344.5 1271,345 1265.5,433.25 1256,430 1193.5,430.75 1153.5,430 1134.75,427.75 1121,454.5 1091,513 1065.75,562 998.25,690.75 995.75,692 700.75,838.25 637,772 442,572 439,577 441.5,592 437,604.5 434.5,610.75 334.5,642 269.5,649.5 263.25,642 279.5,562 282,554.5 265.75,428.25 257,391.25 334.5,390.75 324.5,328 343.7,286 357,257 383,201 391,134 412,131 421,102 419.5,89.5" fill="#e7714a" stroke="#3b3430" stroke-width="1.45" stroke-linejoin="round"/>
<g fill="none" stroke="#3b3430" stroke-width="1.45" stroke-linejoin="round">
<polyline points="412,131 412.5,137.5 421,145 422.5,157 424.5,178 428,191.5 443,189 503,182.5 534.5,177.5 556,175 556.5,184.5 577,188 578,197 578,214.5"/>
<polyline points="536,43 533,162 534.5,169.5 534,177.5"/>
<polyline points="636,56.5 628,69.5 627,79.5 631.5,109.5 644.5,149.5 647,158 648,202 614.5,202 594.5,208 592,214.5 578,216.5"/>
<polyline points="434,192 434.5,242 431,257 432,279.5 424,281 422,296 407,297 404.5,303"/>
<polyline points="443,189 447,222 449.5,262 447.5,292 449.5,303"/>
<polyline points="503,182.5 505.75,234.5 497,269.5 493,303"/>
<polyline points="578,216.5 573,247 569.5,272 568,294.5 569.5,303"/>
<polyline points="568,294.5 637,276 695,276"/>
<polyline points="568,294.5 542,303"/>
<polyline points="749.5,99 742,127 741,142 739,172 742,202 746.5,212 746,223 736,254.5 733,272 728,303"/>
<polyline points="797,104 784.5,142.75 802,138 824.5,137 823,190"/>
<polyline points="746,223 758,226.5 759.5,201.5 769.5,204.5 782,186 789.5,189.5 823,190 857,191.5 876,193"/>
<polyline points="928,90 876,193 859.5,228 844.5,252 824.5,268 824,275"/>
<polyline points="859.5,228 941,236 949.5,224 968,226.5 978,168 1006,186 1003,199.5 996,200 991.5,234.5 1007.5,236 994,274"/>
<polyline points="733,261 769.5,261.5 787,259.5 788,254.5 799.5,255 842,251 844.5,252"/>
<polyline points="695,276 697,266.5 733,263"/>
<polyline points="697,266.5 692,303"/>
<polyline points="790.75,276.5 847,275 896,275 1052,274 1058,269.5"/>
<polyline points="790.75,276.5 784.5,303"/>
<polyline points="847,275 847,303"/>
<polyline points="896,275 903,303"/>
<polyline points="912,275.75 918,303"/>
<polyline points="1059.75,269.5 1037,290.75 991,328"/>
<polyline points="1066,269.5 1101,349.5 1112.25,377 1088.5,387 1089.75,390.75 1073.5,399.5 1038.5,315.75 1046,312.5 1037.25,290.75"/>
<polyline points="1146,269.5 1168.5,322.5 1101,350.75"/>
<polyline points="1112.25,377 1116,387.5 1110.5,388.25 1111,426.5 1134.75,427.75"/>
<polyline points="1147.25,355.25 1202.25,355.25 1202.25,404 1173.5,404 1173.5,388.25 1147.25,388.25 1147.25,355.25"/>
<polyline points="1178.5,355.25 1178.5,404"/>
<polyline points="404.5,303 399.5,312 396.5,329.5 397,345.75 409.5,349.5 415.75,355.75 420.75,370.75 417,404.5 414,423.25"/>
<polyline points="265.75,430 294.5,430.75 342,422 414,423.25 434.5,424 472,422 499.5,419.5 544.5,409.5 572,380 614.5,387 632,387.5 695,394.5"/>
<polyline points="334.5,391.25 362,392.5 382,388.25 420.75,371.5 457,348.25 494.5,322.5 527,307 568.25,295.75 577,292"/>
<polyline points="449.5,303 453.25,314 472,307.5 493.25,306.5 494.5,322.5"/>
<polyline points="568.25,295.75 575.75,304.5 595.75,310.75 597,324.5 587,349.5 580.75,379.5"/>
<polyline points="692,303 688.25,338.25 657,329.5 657,364.5 634.5,364.5 633.25,387"/>
<polyline points="688.25,338.25 695,339.5"/>
<polyline points="614.5,387 609.5,423.25 628.25,428.25 624.5,503.25 657,505.75 655.75,525.75 588.25,513.25 588.25,502 573.25,499.5 568.25,515.75 572,518.25 572,542 582,545.75 574.5,573"/>
<polyline points="499.5,419.5 502,442 529.5,448.25 517,477"/>
<polyline points="529.5,448.25 535.75,448.25 539.5,432 625.75,443.25"/>
<polyline points="497,475.75 517,477 544.5,489.5 572,499.5 588.25,502"/>
<polyline points="497,475.75 482,512 462,537 460.75,547"/>
<polyline points="477,478.25 490.75,484"/>
<polyline points="477,478.25 424.5,534.5 397,560.75 282,554.5"/>
<polyline points="688.25,338.25 737,345 779.5,348.25 798.25,345 814.5,347.5 815.75,352 844.5,352.75 847,303"/>
<polyline points="728,303 727,307 780.75,319.5"/>
<polyline points="784.5,303 780.75,319.5 775.75,335.75 779.5,348.25"/>
<polyline points="737,345 732,374.5 748.25,378.25 740.75,445.75 756.5,448.25 760.75,425.75 790.75,428.25 822,432 857,432.5 884.5,432 873.25,448.25 869.5,455.75 863.25,454 858,504 852,563 864.5,565.75 865.75,573"/>
<polyline points="778.25,348.25 790.75,412 792,428.25"/>
<polyline points="790.75,412 832,404.5 862,400.75 894.5,389.5 918.25,380.75 962,348.25 991,328"/>
<polyline points="903,303 918.25,380.75 925.75,418.25 903.25,422 897,452"/>
<polyline points="873.25,448.25 897,452 925.75,459.5 929.5,443.25 959.5,452"/>
<polyline points="918,303 923.25,328.25 943.25,324.5 962,348.25 972,364.5 964.5,428.25 959.5,452 942,549.5 932,573"/>
<polyline points="964.5,429 999.5,435.75 1037,442 1121,454.5"/>
<polyline points="999.5,435.75 1009.5,499.5 1015.75,534.5 1009.5,573"/>
<polyline points="1037,442 1035.75,452 1058.25,457 1047,519.5 1012,514.5"/>
<polyline points="1009.5,499.5 999.5,498.25 997,510.75 974.5,507 967,554.5 988.25,559.5 987,573"/>
<polyline points="942,549.5 967,554.5"/>
<polyline points="794.5,468 857,502 942,549.5"/>
<polyline points="794.5,468 794.5,463.25 818.25,462 820.75,432"/>
<polyline points="794.5,468 784.5,464.5 778.25,484.5 783.25,488.25 784.5,519.5 778.25,535.75 772,537 770.75,549.5 795.75,553.25 804.5,520.75 852,549.5"/>
<polyline points="460.75,547 448.25,562 442,572"/>
<polyline points="637,772 662,738.25 682,720.75 698.25,689.5 704.5,667 719.5,653.25 763.25,597"/>
<polyline points="577,562 574,574.5 568.25,575.75 665.75,594.5 672,562"/>
<polyline points="568.25,575.75 559.5,613.25 564.5,615.75 565.75,608.25 635.75,622 642,604 650.75,604.5 653.25,593.25"/>
<polyline points="559.5,613.25 540.75,610.75 537,627 632,645.75 635.75,622"/>
<polyline points="852,562 852,564.5 862,565.75 868.25,578.25 868.25,592 857,634.5"/>
<polyline points="938.25,562 904.5,653.25"/>
<polyline points="987,562 986.5,572 1009.5,575.75 1011.5,562"/>
<polyline points="657,520.75 678.6,521.8 688.4,459.3 704,461.2 711.9,418.2 714.8,396.7"/>
<polyline points="711.9,418.2 724.6,419.2 707,570.7"/>
<polyline points="740.2,444.6 735,512 730.5,581.5"/>
<polyline points="678.6,521.8 677.6,532.6 682,544 687.4,554.1 696,563 707,570.7 730.5,581.5 763.25,597 857,634.5 904.5,653.25 995.75,692"/>
<polyline points="677.6,532.6 665.75,594.5"/>
<polyline points="770.5,548.2 767.6,596.2"/>
<polyline points="695,394.5 714.8,396.7 744.1,398.6"/>
</g>
<polygon points="263,264 357,257 343.7,286 324.5,328 242,302" fill="#ffff00" stroke="#3b3430" stroke-width="1.3"/>
<g stroke="#ff1a1a" stroke-width="1.6">
<path d="M258 259L268 269M258 269L268 259"/>
<path d="M352 252L362 262M352 262L362 252"/>
<path d="M338.7 281L348.7 291M338.7 291L348.7 281"/>
<path d="M319.5 323L329.5 333M319.5 333L329.5 323"/>
<path d="M237 297L247 307M237 307L247 297"/>
<path d="M254.5 303L264.5 313M254.5 313L264.5 303"/>
<path d="M273 309L283 319M273 319L283 309"/>
<path d="M298 316.5L308 326.5M298 326.5L308 316.5"/>
</g></svg>
<!-- STATUS -->
<div class="status"></div>
<svg style="left:347px;top:214px" width="40" height="18"><rect x="1" y="1" width="15" height="15" rx="3" fill="none" stroke="#777" stroke-width="1.5"/><rect x="5" y="7" width="6" height="6" rx="1.5" fill="none" stroke="#777" stroke-width="1.5"/><path d="M8 6V5h4v5h-1" fill="none" stroke="#777" stroke-width="1.5"/><rect x="22" y="1" width="15" height="15" rx="3" fill="none" stroke="#777" stroke-width="1.5"/><path d="M26 5l7 7M33 5l-7 7" stroke="#555" stroke-width="2.5"/></svg>
<svg style="left:13px;top:248px" width="24" height="24" viewBox="0 0 24 24"><rect x="2" y="3" width="16" height="16" fill="#f4f4f4" stroke="#777" stroke-width="1.3"/><circle cx="18" cy="19" r="4" fill="#bde0bd" stroke="#3a8a3a" stroke-width="1.6"/></svg>
<svg style="left:50px;top:248px" width="24" height="24" viewBox="0 0 24 24"><path d="M3 10C4 4 11 1 17 4L20 2V9H13L15 7C12 5 8 6 6 10z" fill="#4f8fd6"/><path d="M21 14C20 20 13 23 7 20L4 22V15H11L9 17C12 19 16 18 18 14z" fill="#4f8fd6"/></svg>
<svg style="left:89px;top:248px" width="24" height="24" viewBox="0 0 24 24"><path d="M2 3h20v3l-7 8v9l-3-2v-7L2 6z" fill="#6b9bd2" stroke="#4f79ab"/><rect x="2" y="2" width="20" height="3" fill="#f6e34a"/></svg>
<svg style="left:128px;top:248px" width="24" height="24" viewBox="0 0 24 24"><path d="M3 3h8M3 3v18M3 12h3M3 21h3" stroke="#999" stroke-width="1" fill="none"/><rect x="5" y="9" width="3" height="3" fill="#f5a623"/><rect x="5" y="17" width="3" height="3" fill="#f5a623"/><path d="M15 1l7 7h-4v13h-6V8H8z" fill="#6b9bd2" stroke="#2d5a8a" stroke-width="0.8"/></svg>
<svg style="left:165px;top:248px" width="24" height="24" viewBox="0 0 24 24"><circle cx="12" cy="12" r="10" fill="#6b9bd2" stroke="#4f79ab"/><text x="9" y="18" font-family="Liberation Serif" font-style="italic" font-weight="bold" font-size="14" fill="#fff">i</text></svg>
<svg style="left:30.5px;top:288px" width="24" height="24" viewBox="0 0 24 24"><path d="M12 1l3.2 7 7.6.8-5.7 5.1 1.6 7.5L12 17.6 5.3 21.4l1.6-7.5L1.2 8.8 8.8 8z" fill="#f6e34a" stroke="#c9a313" stroke-width="1"/></svg>
<svg style="left:10px;top:321.4px" width="7" height="12"><path d="M0 0l6 6-6 6z" fill="#555"/></svg>
<svg style="left:30.5px;top:315.4px" width="24" height="24" viewBox="0 0 24 24"><path d="M4 2h16v19H7C5 21 4 20 4 18z" fill="#eee" stroke="#aaa"/><path d="M4 18c0-2 1-3 3-3v6" fill="#ddd" stroke="#aaa"/><path d="M11 1h5v9l-2.5-2.5L11 10z" fill="#6b9bd2" stroke="#4a73a8" stroke-width="0.8"/></svg>
<svg style="left:10px;top:348.8px" width="7" height="12"><path d="M0 0l6 6-6 6z" fill="#555"/></svg>
<svg style="left:30.5px;top:342.8px" width="24" height="24" viewBox="0 0 24 24"><rect x="2" y="3" width="20" height="18" fill="#f4f4f4" stroke="#777" stroke-width="1.2"/><path d="M7 17v-6l5-4 5 4v6z" fill="#fff" stroke="#333" stroke-width="1.2"/></svg>
<svg style="left:10px;top:376.2px" width="7" height="12"><path d="M0 0l6 6-6 6z" fill="#555"/></svg>
<svg style="left:30.5px;top:370.2px" width="24" height="24" viewBox="0 0 24 24"><path d="M2 4h7l2 3h11v15H2z" fill="#f4f4f4" stroke="#777" stroke-width="1.2"/></svg>
<svg style="left:30.5px;top:397.6px" width="24" height="24" viewBox="0 0 24 24"><circle cx="12" cy="9" r="7.5" fill="#6b9bd2" stroke="#3f6fa8"/><path d="M7 6c2 0 3 2 5 1s2-3 4-1M6 11c2-1 5 1 7 0" stroke="#2c5080" stroke-width="1.6" fill="none"/><path d="M1 11l10 5 12-5v8l-12 5-10-5z" fill="#f5e26a" stroke="#6a5410" stroke-width="1"/><path d="M1 11l10 5v8l-10-5z" fill="#d6b32a" stroke="#6a5410" stroke-width="1"/><path d="M1 11l5-2c2 3 9 4 13 0l4 2-12 5z" fill="#f8ec8a" stroke="#6a5410" stroke-width="0.9"/></svg>
<svg style="left:30.5px;top:425px" width="24" height="24" viewBox="0 0 24 24"><path d="M2 23C5 15 10 6 22 1C21 8 17 15 8 18z" fill="#8fb0e0" stroke="#4a73a8" stroke-width="1"/><path d="M3 22C8 14 13 8 20 3" stroke="#2d4a6a" stroke-width="1" fill="none"/></svg>
<svg style="left:30.5px;top:452.4px" width="24" height="24" viewBox="0 0 24 24"><path d="M3 8C2 3 8 1 12 2c4-1 10 1 9 6-1 4-3 6-3 10 0 3-2 5-4 4-1-2 0-5-2-5-2 0-1 3-3 5-2 1-4-1-4-5C5 13 4 11 3 8z" fill="#4f79ab" stroke="#2d4a6a" stroke-width="1.2"/><path d="M9 8v10M14 6c2 2 2 6 0 9" stroke="#fff" stroke-width="1" fill="none"/></svg>
<svg style="left:30.5px;top:479.8px" width="24" height="24" viewBox="0 0 24 24"><rect x="2" y="2" width="20" height="20" fill="none" stroke="#2d4a6a" stroke-width="1.3" stroke-dasharray="1.5 1.5"/><rect x="5" y="5" width="14" height="14" fill="#6b9bd2"/></svg>
<svg style="left:30.5px;top:507.2px" width="24" height="24" viewBox="0 0 24 24"><path d="M4 2h14v6" fill="none" stroke="#aac" stroke-width="1.2"/><path d="M7 6h13v14" fill="none" stroke="#aac" stroke-width="1.2"/></svg>
<div class="ti" style="left:64.6px;top:289.6px;font-size:18.6px;font-weight:normal;color:#000;transform:scaleX(0.942);transform-origin:0 0;">Favoritos</div>
<div class="ti" style="left:64.6px;top:317.0px;font-size:18.6px;font-weight:normal;color:#000;transform:scaleX(0.930);transform-origin:0 0;">Favoritos Espaciais</div>
<div class="ti" style="left:64.6px;top:344.4px;font-size:18.6px;font-weight:normal;color:#000;transform:scaleX(0.967);transform-origin:0 0;">Início</div>
<div class="ti" style="left:64.6px;top:371.9px;font-size:18.6px;font-weight:normal;color:#000;transform:scaleX(1.010);transform-origin:0 0;">C:\</div>
<div class="ti" style="left:64.6px;top:399.3px;font-size:18.6px;font-weight:normal;color:#000;transform:scaleX(0.930);transform-origin:0 0;">GeoPackage</div>
<div class="ti" style="left:64.6px;top:426.7px;font-size:18.6px;font-weight:normal;color:#000;transform:scaleX(0.931);transform-origin:0 0;">SpatiaLite</div>
<div class="ti" style="left:64.6px;top:454.1px;font-size:18.6px;font-weight:normal;color:#000;transform:scaleX(0.898);transform-origin:0 0;">PostgreSQL</div>
<div class="ti" style="left:64.6px;top:481.6px;font-size:18.6px;font-weight:normal;color:#000;transform:scaleX(0.939);transform-origin:0 0;">SAP HANA</div>
<div class="ti" style="left:64.6px;top:509.0px;font-size:18.6px;font-weight:normal;color:#000;transform:scaleX(1.000);transform-origin:0 0;">STAC</div>
<div class="a" style="left:1px;top:519px;width:366px;height:1px;background:#fff"></div><div class="a" style="left:0px;top:520px;width:389px;height:10px;background:#f0f0f0;border-top:1px solid #adadad"></div>
<div class="a" style="left:366px;top:285px;width:22px;height:235px;background:#f0f0f0;border-left:1px solid #e0e0e0"></div>
<div class="a" style="left:367px;top:384px;width:20px;height:114px;background:#cdcdcd"></div>
<svg style="left:370px;top:290px" width="14" height="10"><path d="M1 8l6-6 6 6z" fill="#555"/></svg>
<svg style="left:370px;top:504px" width="14" height="10"><path d="M1 2l6 6 6-6z" fill="#555"/></svg>
<svg style="left:183px;top:523px" width="26" height="3"><path d="M1 1.5h24" stroke="#bbb" stroke-width="1.2" stroke-dasharray="1.2 3"/></svg>
<svg style="left:347px;top:537px" width="40" height="18"><rect x="1" y="1" width="15" height="15" rx="3" fill="none" stroke="#777" stroke-width="1.5"/><rect x="5" y="7" width="6" height="6" rx="1.5" fill="none" stroke="#777" stroke-width="1.5"/><path d="M8 6V5h4v5h-1" fill="none" stroke="#777" stroke-width="1.5"/><rect x="22" y="1" width="15" height="15" rx="3" fill="none" stroke="#777" stroke-width="1.5"/><path d="M26 5l7 7M33 5l-7 7" stroke="#555" stroke-width="2.5"/></svg>
<svg style="left:12px;top:570px" width="24" height="24" viewBox="0 0 24 24"><path d="M2 14l8-4 6 8-6 4z" fill="#e23" /><path d="M2 14l8-4 3 4-8 4z" fill="#f6c33a"/><path d="M10 10l4 6 9-12-2-2z" fill="#c9a060" stroke="#8a6a30" stroke-width="0.8"/></svg>
<svg style="left:51px;top:570px" width="24" height="24" viewBox="0 0 24 24"><path d="M5 8h10v12H5z" fill="#fff" stroke="#888"/><path d="M8 4h10v12" fill="none" stroke="#888"/><path d="M11 2v10" stroke="#888"/><circle cx="18" cy="18" r="4" fill="#bde0bd" stroke="#3a8a3a" stroke-width="1.5"/></svg>
<svg style="left:89px;top:570px" width="24" height="24" viewBox="0 0 24 24"><path d="M1 10c5-7 15-7 20 0-5 7-15 7-20 0z" fill="#fff" stroke="#999" stroke-width="1.2"/><circle cx="11" cy="10" r="4" fill="#4f79ab"/><path d="M17 19h6l-3 3z" fill="#555"/></svg>
<svg style="left:129px;top:570px" width="24" height="24" viewBox="0 0 24 24"><path d="M2 3h18v3l-6 8v8l-3-2v-6L2 6z" fill="#6b9bd2" stroke="#4f79ab"/><rect x="2" y="2" width="18" height="3" fill="#f6e34a"/><path d="M16 19h6l-3 3z" fill="#555"/></svg>
<svg style="left:166px;top:570px" width="24" height="24" viewBox="0 0 24 24"><path d="M12 3C11 2 9.5 1.5 8 1.5C5.5 1.5 4 3 4 5C4 7 5.5 8.2 8 8.3C5.3 8.4 3.5 9.8 3.5 12C3.5 14.3 5.5 15.8 8.3 15.8C10.3 15.8 11.8 15 12.8 14" fill="none" stroke="#6a2c7a" stroke-width="1.8"/><path d="M14 12h8l-2 5v5h-4v-5z" fill="#c8c8c8" stroke="#999"/></svg>
<svg style="left:223px;top:570px" width="24" height="24" viewBox="0 0 24 24"><path d="M3 3h7M3 3v18M3 12h3M3 21h3" stroke="#999" stroke-width="1" fill="none"/><rect x="5" y="9" width="3" height="3" fill="#f5a623"/><rect x="5" y="17" width="3" height="3" fill="#f5a623"/><path d="M15 23l7-7h-4V3h-6v13H8z" fill="#6b9bd2" stroke="#2d5a8a" stroke-width="0.8"/></svg>
<svg style="left:298px;top:570px" width="24" height="24" viewBox="0 0 24 24"><rect x="2" y="2" width="16" height="17" fill="#f4f4f4" stroke="#777" stroke-width="1.3"/><rect x="13" y="16" width="9" height="6" rx="2" fill="#e33"/><path d="M15 19h5" stroke="#fff" stroke-width="1.5"/></svg>
<svg style="left:261px;top:570px" width="24" height="24" viewBox="0 0 24 24"><path d="M3 3h8M3 3v18M3 12h3M3 21h3" stroke="#999" stroke-width="1" fill="none"/><rect x="5" y="9" width="3" height="3" fill="#f5a623"/><rect x="5" y="17" width="3" height="3" fill="#f5a623"/><path d="M15 1l7 7h-4v13h-6V8H8z" fill="#6b9bd2" stroke="#2d5a8a" stroke-width="0.8"/></svg>
<svg style="left:199px;top:580px" width="11" height="6"><path d="M0 0h11l-5.5 5z" fill="#555"/></svg>
<div class="a" style="left:1px;top:608px;width:387px;height:27px;background:#ececec"></div>
<div class="a" style="left:37px;top:612px;width:21px;height:21px;background:#fff;border:1px solid #999"></div>
<svg style="left:40px;top:615px" width="16" height="16"><path d="M2 8l4 5 8-12" fill="none" stroke="#000" stroke-width="2.4"/></svg>
<svg style="left:67px;top:610px" width="25" height="25"><rect x="0.5" y="0.5" width="24" height="24" fill="#e7714a" stroke="#b05030"/><path d="M6 21l2-6 9-12 3 2-9 12z" fill="#f6c33a" stroke="#8a6a20" stroke-width="0.8"/><path d="M6 21l2-6 3 2z" fill="#eee"/></svg>
<svg style="left:392px;top:628px" width="3" height="26"><path d="M1.5 1v24" stroke="#bbb" stroke-width="1.2" stroke-dasharray="1.2 3"/></svg>
<svg style="left:392px;top:1095px" width="3" height="26"></svg>
<div class="box" style="left:7px;top:1087px;width:398px;height:33px;border-radius:4px"></div>
<svg style="left:19px;top:1093px" width="22" height="22"><circle cx="9" cy="9" r="6.5" fill="none" stroke="#777" stroke-width="1.6"/><path d="M14 14l5 5" stroke="#777" stroke-width="2"/></svg>
<div class="box" style="left:657px;top:1087px;width:180px;height:33px"></div>
<svg style="left:843px;top:1092px" width="24" height="24" viewBox="0 0 24 24"><path d="M5 3c3-2 8-1 10 3l4 9c1 4-2 7-6 7s-6-3-7-6L3 8C2 6 3 4 5 3z" fill="#ccc" stroke="#333" stroke-width="1.4"/><path d="M5 9l7-3M9 3l2 6" stroke="#333" stroke-width="1.3"/><circle cx="13" cy="17" r="2.5" fill="#fff" stroke="#333"/><path d="M19 2l3-2" stroke="#555"/></svg>
<div class="box" style="left:940px;top:1087px;width:123px;height:33px;background:linear-gradient(#fdfdfd,#f4f4f4)"></div>
<div class="a" style="left:940px;top:1088px;width:91px;height:31px;background:#fff;border-radius:3px 0 0 3px;border-right:1px solid #d0d0d0"></div>
<svg style="left:1040px;top:1101px" width="12" height="7"><path d="M0 0h11l-5.5 5.5z" fill="#555"/></svg>
<svg style="left:1080px;top:1093px" width="22" height="22" viewBox="0 0 24 24"><path d="M5 10V7c0-5 10-5 10 0v3" fill="none" stroke="#777" stroke-width="2.5"/><rect x="2" y="10" width="16" height="12" rx="2" fill="#666"/></svg>
<div class="box" style="left:1154px;top:1088px;width:127px;height:32px"></div>
<div class="a" style="left:1259px;top:1089px;width:1px;height:30px;background:#d0d0d0"></div>
<svg style="left:1263px;top:1093px" width="14" height="22"><path d="M2 8l5-5 5 5z M2 14l5 5 5-5z" fill="#555"/></svg>
<div class="box" style="left:1370px;top:1088px;width:128px;height:32px"></div>
<div class="a" style="left:1476px;top:1089px;width:1px;height:30px;background:#d0d0d0"></div>
<svg style="left:1480px;top:1093px" width="14" height="22"><path d="M2 8l5-5 5 5z M2 14l5 5 5-5z" fill="#555"/></svg>
<div class="a" style="left:1508px;top:1093px;width:21px;height:21px;background:#fff;border:1px solid #999"></div>
<svg style="left:1511px;top:1096px" width="16" height="16"><path d="M2 8l4 5 8-12" fill="none" stroke="#000" stroke-width="2.4"/></svg>
<svg style="left:1640px;top:1093px" width="22" height="22" viewBox="0 0 24 24"><circle cx="12" cy="12" r="10" fill="none" stroke="#888" stroke-width="1.3"/><path d="M2 12h20M12 2v20M4 7h16M4 17h16" stroke="#888" stroke-width="1"/><ellipse cx="12" cy="12" rx="5" ry="10" fill="none" stroke="#888" stroke-width="1"/></svg>
<svg style="left:1782px;top:1091px" width="26" height="26" viewBox="0 0 24 24"><path d="M12 2C5 2 1 6 1 10s4 8 9 8l5 4-1-4c5-1 9-4 9-8 0-4-4-8-11-8z" fill="#666"/></svg>
<svg style="left:1834px;top:1106px" width="16" height="16"><g fill="#bbb"><circle cx="13" cy="2" r="1"/><circle cx="9" cy="6" r="1"/><circle cx="13" cy="6" r="1"/><circle cx="5" cy="10" r="1"/><circle cx="9" cy="10" r="1"/><circle cx="13" cy="10" r="1"/><circle cx="1" cy="14" r="1"/><circle cx="5" cy="14" r="1"/><circle cx="9" cy="14" r="1"/><circle cx="13" cy="14" r="1"/></g></svg>
<div class="ti" style="left:101.0px;top:612.0px;font-size:19.5px;font-weight:bold;color:#000;transform:scaleX(0.804);transform-origin:0 0;text-decoration:underline;text-underline-offset:2px">TESTE</div>
<div class="ti" style="left:49.0px;top:1094.9px;font-size:17.8px;font-weight:normal;color:#6d6d6d;transform:scaleX(0.923);transform-origin:0 0;">Escreva para localizar (Ctrl+K)</div>
<div class="ti" style="left:561.0px;top:1094.9px;font-size:17.8px;font-weight:normal;color:#000;transform:scaleX(0.909);transform-origin:0 0;">Coordenada</div>
<div class="ti" style="left:667.5px;top:1094.9px;font-size:17.8px;font-weight:normal;color:#000;transform:scaleX(0.964);transform-origin:0 0;">-5,0318°&nbsp; -42,47615°</div>
<div class="ti" style="left:887.5px;top:1094.9px;font-size:17.8px;font-weight:normal;color:#000;transform:scaleX(0.843);transform-origin:0 0;">Escala</div>
<div class="ti" style="left:945.5px;top:1094.9px;font-size:17.8px;font-weight:normal;color:#000;transform:scaleX(0.933);transform-origin:0 0;">1:35683</div>
<div class="ti" style="left:1112.5px;top:1094.9px;font-size:17.8px;font-weight:normal;color:#000;transform:scaleX(0.872);transform-origin:0 0;">Lupa</div>
<div class="ti" style="left:1162.0px;top:1094.9px;font-size:17.8px;font-weight:normal;color:#000;transform:scaleX(0.918);transform-origin:0 0;">100%</div>
<div class="ti" style="left:1293.8px;top:1094.9px;font-size:17.8px;font-weight:normal;color:#000;transform:scaleX(0.925);transform-origin:0 0;">Rotação</div>
<div class="ti" style="left:1377.5px;top:1094.9px;font-size:17.8px;font-weight:normal;color:#000;transform:scaleX(0.986);transform-origin:0 0;">0,0 °</div>
<div class="ti" style="left:1535.7px;top:1094.9px;font-size:17.8px;font-weight:normal;color:#000;transform:scaleX(0.908);transform-origin:0 0;">Renderizar</div>
<div class="ti" style="left:1665.8px;top:1094.9px;font-size:17.8px;font-weight:normal;color:#000;transform:scaleX(0.875);transform-origin:0 0;">EPSG:4674</div>
<div class="ti" style="left:7.0px;top:211.9px;font-size:18.9px;font-weight:normal;color:#000;transform:scaleX(0.952);transform-origin:0 0;">Navegador</div>
<div class="ti" style="left:6.5px;top:533.9px;font-size:18.9px;font-weight:normal;color:#000;transform:scaleX(0.921);transform-origin:0 0;">Camadas</div>
</body></html>
